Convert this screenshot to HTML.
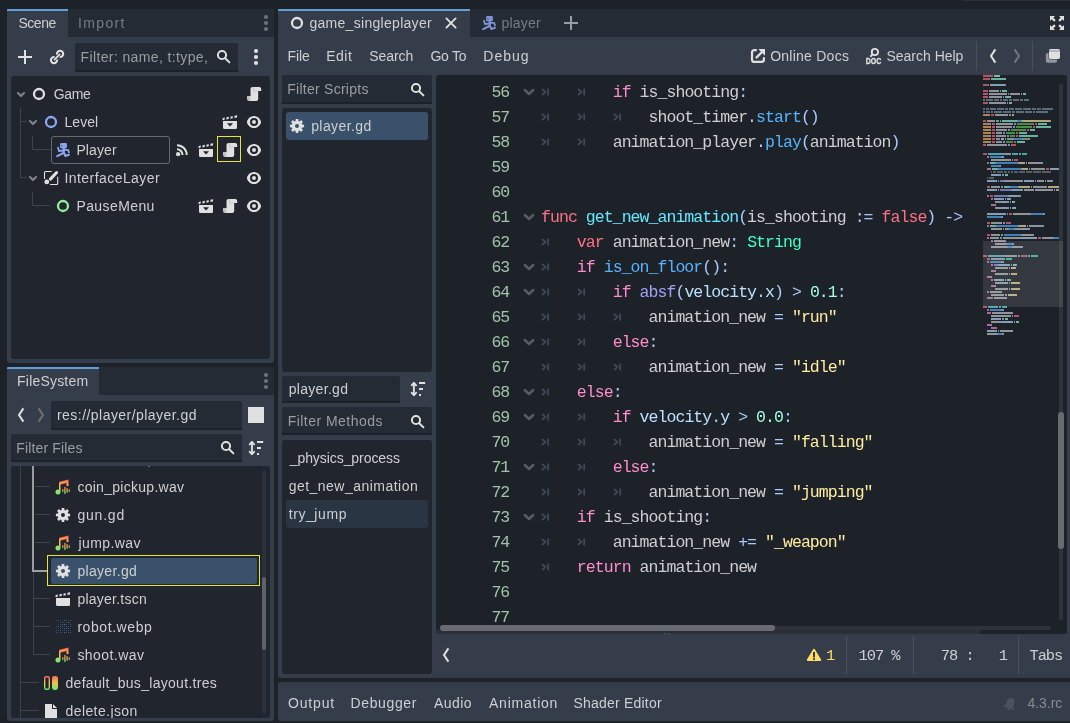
<!DOCTYPE html>
<html lang="en"><head><meta charset="utf-8"><title>Godot Script Editor</title><style>
html,body{margin:0;padding:0;}
body{width:1070px;height:723px;overflow:hidden;background:#1d2229;position:relative;font-family:"Liberation Sans",sans-serif;}
body div,body span,body svg{position:absolute;display:block;}
#root{left:0;top:0;width:1070px;height:723px;overflow:hidden;will-change:transform;}
.t{white-space:pre;font-family:"Liberation Sans",sans-serif;}
.m{white-space:pre;font-family:"Liberation Mono",monospace;}
</style></head><body>
<div id="root">
<div style="left:963px;top:0px;width:107px;height:1px;background:#2a2f38;"></div>
<div style="left:7px;top:9px;width:267px;height:354px;background:#363d4a;border-radius:3px;"></div>
<div style="left:7px;top:9px;width:267px;height:28px;background:#252b34;border-radius:3px 3px 0 0;"></div>
<div style="left:7px;top:9px;width:61px;height:28px;background:#363d4a;border-top:2px solid #5fa0dc;box-sizing:border-box;border-radius:1px 0 0 0;"></div>
<span id="t1" class="t " style="left:18.4px;top:13.0px;line-height:20px;font-size:14px;color:#cdcfd2;letter-spacing:-0.453px;margin-left:0.00px;">Scene</span>
<span id="t2" class="t " style="left:78.9px;top:13.0px;line-height:20px;font-size:14px;color:#777b83;letter-spacing:1.383px;margin-left:-1.00px;">Import</span>
<svg style="left:258px;top:15px;overflow:visible;" width="16" height="16" viewBox="0 0 16 16"><g fill="#6d7177"><circle cx="8" cy="2" r="2.100"/><circle cx="8" cy="8" r="2.100"/><circle cx="8" cy="14" r="2.100"/></g></svg>
<svg style="left:17px;top:49px;overflow:visible;" width="16" height="16" viewBox="0 0 16 16"><path fill="#e0e0e0" d="M7 1v6H1v2h6v6h2V9h6V7H9V1z"/></svg>
<svg style="left:49px;top:49px;overflow:visible;" width="16" height="16" viewBox="0 0 16 16"><g fill="none" stroke="#e0e0e0" stroke-width="2.100"><circle cx="11.100" cy="4.900" r="3.100"/><circle cx="5" cy="11.100" r="3.100"/></g><path d="M6.400 9.700 9.700 6.300" stroke="#363d4a" stroke-width="4" fill="none"/><path d="M5.500 10.600 10.600 5.400" stroke="#e0e0e0" stroke-width="1.800" stroke-linecap="round" fill="none"/></svg>
<div style="left:75px;top:43px;width:163px;height:29px;background:#252b34;border-radius:2px 2px 0 0;border-bottom:2px solid #1d2229;box-sizing:border-box;"></div>
<span id="t3" class="t " style="left:81.5px;top:47.0px;line-height:20px;font-size:14px;color:#9a9da2;letter-spacing:0.378px;margin-left:-1.00px;">Filter: name, t:type,</span>
<svg style="left:214.9px;top:48px;overflow:visible;" width="16" height="16" viewBox="0 0 16 16"><circle cx="7" cy="7" r="4.100" stroke="#e0e0e0" stroke-width="2" fill="none"/><path d="M10.200 10.200 14.400 14.400" stroke="#e0e0e0" stroke-width="2" stroke-linecap="round"/></svg>
<svg style="left:248px;top:49px;overflow:visible;" width="16" height="16" viewBox="0 0 16 16"><g fill="#e0e0e0"><circle cx="8" cy="2" r="2.100"/><circle cx="8" cy="8" r="2.100"/><circle cx="8" cy="14" r="2.100"/></g></svg>
<div style="left:11px;top:76px;width:259px;height:283px;background:#21262e;border-radius:3px;"></div>
<div style="left:20px;top:108px;width:1px;height:70px;background:#3e434b;"></div>
<div style="left:20px;top:121px;width:7px;height:1px;background:#3e434b;"></div>
<div style="left:20px;top:177px;width:7px;height:1px;background:#3e434b;"></div>
<div style="left:32px;top:136px;width:1px;height:14px;background:#3e434b;"></div>
<div style="left:32px;top:149px;width:19px;height:1px;background:#3e434b;"></div>
<div style="left:32px;top:192px;width:1px;height:14px;background:#3e434b;"></div>
<div style="left:32px;top:205px;width:18px;height:1px;background:#3e434b;"></div>
<svg style="left:13px;top:86px;overflow:visible;" width="16" height="16" viewBox="0 0 16 16"><path d="m5 7 3 3 3-3" fill="none" stroke="#7d8086" stroke-width="2.200" stroke-linecap="round" stroke-linejoin="round"/></svg>
<svg style="left:31px;top:86px;overflow:visible;" width="16" height="16" viewBox="0 0 16 16"><circle cx="8" cy="8" r="5" fill="none" stroke="#e0e0e0" stroke-width="2.300"/></svg>
<span id="t4" class="t " style="left:53.8px;top:84.0px;line-height:20px;font-size:14px;color:#cdcfd2;letter-spacing:-0.379px;margin-left:0.00px;">Game</span>
<svg style="left:246px;top:86px;overflow:visible;" width="16" height="16" viewBox="0 0 16 16"><path fill="#e0e0e0" d="M6.500 1a2 2 0 0 0-2 2v7H1v3a2 2 0 0 0 2 2h7.200a2 2 0 0 0 2-2V5h3V3a2 2 0 0 0-2-2z"/><path fill="#000" fill-opacity=".13" d="M1 10h3.500v5H3a2 2 0 0 1-2-2z"/><path d="M7.600 1.200V5H12" fill="none" stroke="#000" stroke-opacity=".13" stroke-width=".8"/></svg>
<svg style="left:25px;top:114px;overflow:visible;" width="16" height="16" viewBox="0 0 16 16"><path d="m5 7 3 3 3-3" fill="none" stroke="#7d8086" stroke-width="2.200" stroke-linecap="round" stroke-linejoin="round"/></svg>
<svg style="left:43px;top:114px;overflow:visible;" width="16" height="16" viewBox="0 0 16 16"><circle cx="8" cy="8" r="5" fill="none" stroke="#8da5f3" stroke-width="2.300"/></svg>
<span id="t5" class="t " style="left:65.5px;top:112.0px;line-height:20px;font-size:14px;color:#cdcfd2;letter-spacing:0.035px;margin-left:-1.00px;">Level</span>
<svg style="left:222px;top:114px;overflow:visible;" width="16" height="16" viewBox="0 0 16 16"><path fill="#e0e0e0" fill-rule="evenodd" d="M1 7H15V13.500a1.500 1.500 0 0 1-1.500 1.500H2.500A1.500 1.500 0 0 1 1 13.500zM5 9.200h6l-3 3.400z"/><path fill="#e0e0e0" d="M0.50 6.18 L0.65 3.95 L2.75 3.58 L2.60 5.80zM4.40 5.48 L4.55 3.26 L6.85 2.85 L6.70 5.07zM8.40 4.77 L8.55 2.55 L10.85 2.14 L10.70 4.36zM12.40 4.06 L12.55 1.83 L15.15 1.37 L15.00 3.60z"/></svg>
<svg style="left:246px;top:114px;overflow:visible;" width="16" height="16" viewBox="0 0 16 16"><path fill="#e0e0e0" fill-rule="evenodd" d="M8 1.900C3.600 1.900 1.200 5.800.9 8c.3 2.200 2.700 6.100 7.100 6.100s6.800-3.900 7.100-6.100C14.800 5.800 12.400 1.900 8 1.900zM8 4a4 4 0 0 1 0 8 4 4 0 0 1 0-8zm0 2a2 2 0 0 0 0 4 2 2 0 0 0 0-4z"/></svg>
<div style="left:51px;top:136px;width:119px;height:28px;background:transparent;border:1px solid #666a72;border-radius:3px;box-sizing:border-box;"></div>
<svg style="left:55px;top:142px;overflow:visible;" width="16" height="16" viewBox="0 0 16 16"><rect x="5.100" y="1" width="6.800" height="5.200" rx="1.200" fill="#8da5f3"/><rect x="6" y="3.100" width="1.700" height="1.400" fill="#1d2229" fill-opacity=".4"/><g fill="none" stroke="#8da5f3" stroke-linecap="round" stroke-linejoin="round"><path d="M8.700 6V11.200" stroke-width="2.300" stroke-linecap="butt"/><path d="M8.500 8.500 3.900 9 3 5.600" stroke-width="1.800"/><path d="M9 7.800H13.100L14 10.400" stroke-width="1.800"/><path d="M8.500 11 2.200 14.200" stroke-width="2"/><path d="M9 11 10.400 14 13.900 12.800" stroke-width="2"/></g></svg>
<span id="t6" class="t " style="left:77.4px;top:140.0px;line-height:20px;font-size:14px;color:#cdcfd2;letter-spacing:0.116px;margin-left:-1.00px;">Player</span>
<svg style="left:174px;top:142px;overflow:visible;" width="16" height="16" viewBox="0 0 16 16"><g fill="none" stroke="#e0e0e0" stroke-width="2"><path d="M3 3.200A9.700 9.700 0 0 1 12.700 12.900"/><path d="M3 7.300A5.600 5.600 0 0 1 8.600 12.900"/></g><circle cx="4.100" cy="12.200" r="2.100" fill="#e0e0e0"/></svg>
<svg style="left:198px;top:142px;overflow:visible;" width="16" height="16" viewBox="0 0 16 16"><path fill="#e0e0e0" fill-rule="evenodd" d="M1 7H15V13.500a1.500 1.500 0 0 1-1.500 1.500H2.500A1.500 1.500 0 0 1 1 13.500zM5 9.200h6l-3 3.400z"/><path fill="#e0e0e0" d="M0.50 6.18 L0.65 3.95 L2.75 3.58 L2.60 5.80zM4.40 5.48 L4.55 3.26 L6.85 2.85 L6.70 5.07zM8.40 4.77 L8.55 2.55 L10.85 2.14 L10.70 4.36zM12.40 4.06 L12.55 1.83 L15.15 1.37 L15.00 3.60z"/></svg>
<div style="left:217px;top:136px;width:24px;height:26px;background:transparent;border:1px solid #e6e62e;box-sizing:border-box;"></div>
<svg style="left:222px;top:142px;overflow:visible;" width="16" height="16" viewBox="0 0 16 16"><path fill="#e0e0e0" d="M6.500 1a2 2 0 0 0-2 2v7H1v3a2 2 0 0 0 2 2h7.200a2 2 0 0 0 2-2V5h3V3a2 2 0 0 0-2-2z"/><path fill="#000" fill-opacity=".13" d="M1 10h3.500v5H3a2 2 0 0 1-2-2z"/><path d="M7.600 1.200V5H12" fill="none" stroke="#000" stroke-opacity=".13" stroke-width=".8"/></svg>
<svg style="left:246px;top:142px;overflow:visible;" width="16" height="16" viewBox="0 0 16 16"><path fill="#e0e0e0" fill-rule="evenodd" d="M8 1.900C3.600 1.900 1.200 5.800.9 8c.3 2.200 2.700 6.100 7.100 6.100s6.800-3.900 7.100-6.100C14.800 5.800 12.400 1.900 8 1.900zM8 4a4 4 0 0 1 0 8 4 4 0 0 1 0-8zm0 2a2 2 0 0 0 0 4 2 2 0 0 0 0-4z"/></svg>
<svg style="left:25px;top:170px;overflow:visible;" width="16" height="16" viewBox="0 0 16 16"><path d="m5 7 3 3 3-3" fill="none" stroke="#7d8086" stroke-width="2.200" stroke-linecap="round" stroke-linejoin="round"/></svg>
<svg style="left:43px;top:170px;overflow:visible;" width="16" height="16" viewBox="0 0 16 16"><g fill="none" stroke="#e0e0e0" stroke-width="1.100"><path d="M1.500 9V2.500a1 1 0 0 1 1-1H8.600"/><path d="M14.700 6.700V13.500a1 1 0 0 1-1 1H7"/></g><path d="M13.600 2.500 7.400 9.100" stroke="#e0e0e0" stroke-width="3" stroke-linecap="round" fill="none"/><circle cx="3.800" cy="11.900" r="2.400" fill="#e0e0e0"/></svg>
<span id="t7" class="t " style="left:65.5px;top:168.0px;line-height:20px;font-size:14px;color:#cdcfd2;letter-spacing:0.436px;margin-left:-1.00px;">InterfaceLayer</span>
<svg style="left:246px;top:170px;overflow:visible;" width="16" height="16" viewBox="0 0 16 16"><path fill="#e0e0e0" fill-rule="evenodd" d="M8 1.900C3.600 1.900 1.200 5.800.9 8c.3 2.200 2.700 6.100 7.100 6.100s6.800-3.900 7.100-6.100C14.800 5.800 12.400 1.900 8 1.900zM8 4a4 4 0 0 1 0 8 4 4 0 0 1 0-8zm0 2a2 2 0 0 0 0 4 2 2 0 0 0 0-4z"/></svg>
<svg style="left:55px;top:198px;overflow:visible;" width="16" height="16" viewBox="0 0 16 16"><circle cx="8" cy="8" r="5" fill="none" stroke="#8eef97" stroke-width="2.300"/></svg>
<span id="t8" class="t " style="left:77.4px;top:196.0px;line-height:20px;font-size:14px;color:#cdcfd2;letter-spacing:0.409px;margin-left:-1.00px;">PauseMenu</span>
<svg style="left:198px;top:198px;overflow:visible;" width="16" height="16" viewBox="0 0 16 16"><path fill="#e0e0e0" fill-rule="evenodd" d="M1 7H15V13.500a1.500 1.500 0 0 1-1.500 1.500H2.500A1.500 1.500 0 0 1 1 13.500zM5 9.200h6l-3 3.400z"/><path fill="#e0e0e0" d="M0.50 6.18 L0.65 3.95 L2.75 3.58 L2.60 5.80zM4.40 5.48 L4.55 3.26 L6.85 2.85 L6.70 5.07zM8.40 4.77 L8.55 2.55 L10.85 2.14 L10.70 4.36zM12.40 4.06 L12.55 1.83 L15.15 1.37 L15.00 3.60z"/></svg>
<svg style="left:222px;top:198px;overflow:visible;" width="16" height="16" viewBox="0 0 16 16"><path fill="#e0e0e0" d="M6.500 1a2 2 0 0 0-2 2v7H1v3a2 2 0 0 0 2 2h7.200a2 2 0 0 0 2-2V5h3V3a2 2 0 0 0-2-2z"/><path fill="#000" fill-opacity=".13" d="M1 10h3.500v5H3a2 2 0 0 1-2-2z"/><path d="M7.600 1.200V5H12" fill="none" stroke="#000" stroke-opacity=".13" stroke-width=".8"/></svg>
<svg style="left:246px;top:198px;overflow:visible;" width="16" height="16" viewBox="0 0 16 16"><path fill="#e0e0e0" fill-rule="evenodd" d="M8 1.900C3.600 1.900 1.200 5.800.9 8c.3 2.200 2.700 6.100 7.100 6.100s6.800-3.900 7.100-6.100C14.800 5.800 12.400 1.900 8 1.900zM8 4a4 4 0 0 1 0 8 4 4 0 0 1 0-8zm0 2a2 2 0 0 0 0 4 2 2 0 0 0 0-4z"/></svg>
<div style="left:7px;top:367px;width:267px;height:354px;background:#363d4a;border-radius:3px;"></div>
<div style="left:7px;top:367px;width:267px;height:28px;background:#252b34;border-radius:3px 3px 0 0;"></div>
<div style="left:7px;top:367px;width:92px;height:28px;background:#363d4a;border-top:2px solid #5fa0dc;box-sizing:border-box;border-radius:1px 0 0 0;"></div>
<span id="t9" class="t " style="left:18.1px;top:371.0px;line-height:20px;font-size:14px;color:#cdcfd2;letter-spacing:0.192px;margin-left:-1.00px;">FileSystem</span>
<svg style="left:258px;top:373px;overflow:visible;" width="16" height="16" viewBox="0 0 16 16"><g fill="#6d7177"><circle cx="8" cy="2" r="2.100"/><circle cx="8" cy="8" r="2.100"/><circle cx="8" cy="14" r="2.100"/></g></svg>
<svg style="left:13px;top:407px;overflow:visible;" width="16" height="16" viewBox="0 0 16 16"><path d="M10.400 1.400 6 8l4.400 6.600" stroke="#e0e0e0" stroke-width="2" stroke-linejoin="miter" fill="none"/></svg>
<svg style="left:33px;top:407px;overflow:visible;" width="16" height="16" viewBox="0 0 16 16"><path d="M5.600 1.400 10 8l-4.400 6.600" stroke="#6d7177" stroke-width="2" stroke-linejoin="miter" fill="none"/></svg>
<div style="left:51px;top:401px;width:191px;height:29px;background:#252b34;border-radius:2px 2px 0 0;border-bottom:2px solid #1d2229;box-sizing:border-box;"></div>
<span id="t10" class="t " style="left:57px;top:405.0px;line-height:20px;font-size:14px;color:#cdcfd2;letter-spacing:0.454px;margin-left:0.00px;">res://player/player.gd</span>
<div style="left:248px;top:407px;width:16px;height:16px;background:#e0e0e0;"></div>
<div style="left:11px;top:434px;width:231px;height:28px;background:#252b34;border-radius:2px 2px 0 0;border-bottom:2px solid #1d2229;box-sizing:border-box;"></div>
<span id="t11" class="t " style="left:17.3px;top:438.0px;line-height:20px;font-size:14px;color:#9a9da2;letter-spacing:0.149px;margin-left:-1.00px;">Filter Files</span>
<svg style="left:218.9px;top:439px;overflow:visible;" width="16" height="16" viewBox="0 0 16 16"><circle cx="7" cy="7" r="4.100" stroke="#e0e0e0" stroke-width="2" fill="none"/><path d="M10.200 10.200 14.400 14.400" stroke="#e0e0e0" stroke-width="2" stroke-linecap="round"/></svg>
<svg style="left:248px;top:440px;overflow:visible;" width="16" height="16" viewBox="0 0 16 16"><g fill="none" stroke="#e0e0e0" stroke-width="1.900" stroke-linecap="round" stroke-linejoin="round"><path d="M3.900 2.200V13.900"/><path d="M1.700 4.300 3.900 2 6.100 4.300"/><path d="M1.700 11.800 3.900 14.100 6.100 11.800"/></g><path fill="#e0e0e0" d="M9 1.100h6.200v1.800H9zM9 7h4v2H9zM9 12.900h2V15H9z"/></svg>
<div style="left:11px;top:466px;width:259px;height:252px;background:#21262e;border-radius:3px;"></div>
<div style="left:11px;top:466px;width:259px;height:252px;overflow:hidden;border-radius:3px;">
<div style="left:9px;top:0px;width:1px;height:252px;background:#3e434b;"></div>
<div style="left:21px;top:0px;width:2px;height:106px;background:#9b9da1;"></div>
<div style="left:21px;top:104px;width:15px;height:2px;background:#9b9da1;"></div>
<div style="left:22px;top:106px;width:1px;height:83px;background:#3e434b;"></div>
<div style="left:24px;top:20px;width:15px;height:1px;background:#3e434b;"></div>
<div style="left:24px;top:48px;width:15px;height:1px;background:#3e434b;"></div>
<div style="left:24px;top:76px;width:15px;height:1px;background:#3e434b;"></div>
<div style="left:22px;top:132px;width:17px;height:1px;background:#3e434b;"></div>
<div style="left:22px;top:160px;width:17px;height:1px;background:#3e434b;"></div>
<div style="left:22px;top:188px;width:17px;height:1px;background:#3e434b;"></div>
<div style="left:9px;top:216px;width:19px;height:1px;background:#3e434b;"></div>
<div style="left:9px;top:244px;width:19px;height:1px;background:#3e434b;"></div>
<div style="left:137px;top:0px;width:2px;height:1px;background:#6d7075;"></div>
</div>
<div style="left:47px;top:555px;width:213px;height:31px;background:transparent;border:1px solid #e6e62e;box-sizing:border-box;"></div>
<div style="left:51px;top:558px;width:206px;height:26px;background:#39516a;border-radius:2px;"></div>
<svg style="left:55px;top:479px;overflow:visible;" width="16" height="16" viewBox="0 0 16 16"><defs><linearGradient id="ag0" x1="0" y1="0" x2="0" y2="1"><stop offset="0" stop-color="#ff6b5a"/><stop offset=".5" stop-color="#f0c050"/><stop offset="1" stop-color="#62f070"/></linearGradient></defs><g fill="url(#ag0)"><path d="M13.500 .6 4.700 2.700a1 1 0 0 0-.7 1v7.040A2.600 2.600 0 0 0 3 10.500a2.500 2.500 0 1 0 2.500 2.500V5.500l6-1.400V7h2z"/><rect x="7.300" y="10" width="1" height="3" rx=".5"/><rect x="9.300" y="7.500" width="1.200" height="7.500" rx=".6"/><rect x="11.500" y="8.800" width="1.200" height="5" rx=".6"/><rect x="13.700" y="10" width="1" height="3" rx=".5"/></g></svg>
<span id="t12" class="t " style="left:77.4px;top:477.0px;line-height:20px;font-size:14px;color:#cdcfd2;letter-spacing:0.277px;margin-left:0.00px;">coin_pickup.wav</span>
<svg style="left:55px;top:507px;overflow:visible;" width="16" height="16" viewBox="0 0 16 16"><path fill="#e0e0e0" fill-rule="evenodd" d="M6.56 2.90 L6.71 0.92 L9.29 0.92 L9.44 2.90 L10.59 3.38 L12.09 2.08 L13.92 3.91 L12.62 5.41 L13.10 6.56 L15.08 6.71 L15.08 9.29 L13.10 9.44 L12.62 10.59 L13.92 12.09 L12.09 13.92 L10.59 12.62 L9.44 13.10 L9.29 15.08 L6.71 15.08 L6.56 13.10 L5.41 12.62 L3.91 13.92 L2.08 12.09 L3.38 10.59 L2.90 9.44 L0.92 9.29 L0.92 6.71 L2.90 6.56 L3.38 5.41 L2.08 3.91 L3.91 2.08 L5.41 3.38z M8 6a2 2 0 0 0 0 4 2 2 0 0 0 0-4z"/></svg>
<span id="t13" class="t " style="left:77.4px;top:505.0px;line-height:20px;font-size:14px;color:#cdcfd2;letter-spacing:0.793px;margin-left:0.00px;">gun.gd</span>
<svg style="left:55px;top:535px;overflow:visible;" width="16" height="16" viewBox="0 0 16 16"><defs><linearGradient id="ag2" x1="0" y1="0" x2="0" y2="1"><stop offset="0" stop-color="#ff6b5a"/><stop offset=".5" stop-color="#f0c050"/><stop offset="1" stop-color="#62f070"/></linearGradient></defs><g fill="url(#ag2)"><path d="M13.500 .6 4.700 2.700a1 1 0 0 0-.7 1v7.040A2.600 2.600 0 0 0 3 10.500a2.500 2.500 0 1 0 2.500 2.500V5.500l6-1.400V7h2z"/><rect x="7.300" y="10" width="1" height="3" rx=".5"/><rect x="9.300" y="7.500" width="1.200" height="7.500" rx=".6"/><rect x="11.500" y="8.800" width="1.200" height="5" rx=".6"/><rect x="13.700" y="10" width="1" height="3" rx=".5"/></g></svg>
<span id="t14" class="t " style="left:77.4px;top:533.0px;line-height:20px;font-size:14px;color:#cdcfd2;letter-spacing:0.424px;margin-left:1.00px;">jump.wav</span>
<svg style="left:55px;top:563px;overflow:visible;" width="16" height="16" viewBox="0 0 16 16"><path fill="#e0e0e0" fill-rule="evenodd" d="M6.56 2.90 L6.71 0.92 L9.29 0.92 L9.44 2.90 L10.59 3.38 L12.09 2.08 L13.92 3.91 L12.62 5.41 L13.10 6.56 L15.08 6.71 L15.08 9.29 L13.10 9.44 L12.62 10.59 L13.92 12.09 L12.09 13.92 L10.59 12.62 L9.44 13.10 L9.29 15.08 L6.71 15.08 L6.56 13.10 L5.41 12.62 L3.91 13.92 L2.08 12.09 L3.38 10.59 L2.90 9.44 L0.92 9.29 L0.92 6.71 L2.90 6.56 L3.38 5.41 L2.08 3.91 L3.91 2.08 L5.41 3.38z M8 6a2 2 0 0 0 0 4 2 2 0 0 0 0-4z"/></svg>
<span id="t15" class="t " style="left:77.4px;top:561.0px;line-height:20px;font-size:14px;color:#cdcfd2;letter-spacing:0.321px;margin-left:0.00px;">player.gd</span>
<svg style="left:55px;top:591px;overflow:visible;" width="16" height="16" viewBox="0 0 16 16"><path fill="#e0e0e0" d="M1 7H15V13.500a1.500 1.500 0 0 1-1.500 1.500H2.500A1.500 1.500 0 0 1 1 13.500z"/><path fill="#e0e0e0" d="M0.50 6.18 L0.65 3.95 L2.75 3.58 L2.60 5.80zM4.40 5.48 L4.55 3.26 L6.85 2.85 L6.70 5.07zM8.40 4.77 L8.55 2.55 L10.85 2.14 L10.70 4.36zM12.40 4.06 L12.55 1.83 L15.15 1.37 L15.00 3.60z"/></svg>
<span id="t16" class="t " style="left:77.4px;top:589.0px;line-height:20px;font-size:14px;color:#cdcfd2;letter-spacing:0.246px;margin-left:0.00px;">player.tscn</span>
<svg style="left:55px;top:619px;overflow:visible;shape-rendering:crispEdges;" width="16" height="16" viewBox="0 0 16 16"><rect x="1" y="1" width="1" height="1" fill="#3a5f9f" fill-opacity="0.45"/><rect x="3" y="1" width="1" height="1" fill="#4a78c0" fill-opacity="0.6"/><rect x="5" y="1" width="1" height="1" fill="#2f4f8f" fill-opacity="0.2"/><rect x="7" y="1" width="1" height="1" fill="#5a8fd0" fill-opacity="0.2"/><rect x="9" y="1" width="1" height="1" fill="#4a78c0" fill-opacity="0.8"/><rect x="11" y="1" width="1" height="1" fill="#3a5f9f" fill-opacity="0.8"/><rect x="13" y="1" width="1" height="1" fill="#4a78c0" fill-opacity="0.2"/><rect x="15" y="1" width="1" height="1" fill="#6f7f9f" fill-opacity="0.6"/><rect x="1" y="3" width="1" height="1" fill="#3a5f9f" fill-opacity="0.2"/><rect x="3" y="3" width="1" height="1" fill="#2f4f8f" fill-opacity="0.2"/><rect x="5" y="3" width="1" height="1" fill="#4a78c0" fill-opacity="0.6"/><rect x="7" y="3" width="1" height="1" fill="#4a78c0" fill-opacity="0.8"/><rect x="9" y="3" width="1" height="1" fill="#2f4f8f" fill-opacity="0.3"/><rect x="11" y="3" width="1" height="1" fill="#2f4f8f" fill-opacity="0.2"/><rect x="13" y="3" width="1" height="1" fill="#6f7f9f" fill-opacity="0.8"/><rect x="15" y="3" width="1" height="1" fill="#3a5f9f" fill-opacity="0.2"/><rect x="1" y="5" width="1" height="1" fill="#2f4f8f" fill-opacity="0.2"/><rect x="3" y="5" width="1" height="1" fill="#5a8fd0" fill-opacity="0.3"/><rect x="5" y="5" width="1" height="1" fill="#3a5f9f" fill-opacity="0.6"/><rect x="7" y="5" width="1" height="1" fill="#4a78c0" fill-opacity="0.8"/><rect x="9" y="5" width="1" height="1" fill="#5a8fd0" fill-opacity="0.8"/><rect x="11" y="5" width="1" height="1" fill="#3a5f9f" fill-opacity="0.8"/><rect x="13" y="5" width="1" height="1" fill="#2f4f8f" fill-opacity="0.2"/><rect x="15" y="5" width="1" height="1" fill="#3a5f9f" fill-opacity="0.8"/><rect x="1" y="7" width="1" height="1" fill="#4a78c0" fill-opacity="0.45"/><rect x="3" y="7" width="1" height="1" fill="#4a78c0" fill-opacity="0.8"/><rect x="5" y="7" width="1" height="1" fill="#4a78c0" fill-opacity="0.8"/><rect x="7" y="7" width="1" height="1" fill="#3a5f9f" fill-opacity="0.8"/><rect x="9" y="7" width="1" height="1" fill="#2f4f8f" fill-opacity="0.6"/><rect x="11" y="7" width="1" height="1" fill="#5a8fd0" fill-opacity="0.6"/><rect x="13" y="7" width="1" height="1" fill="#2f4f8f" fill-opacity="0.6"/><rect x="15" y="7" width="1" height="1" fill="#5a8fd0" fill-opacity="0.6"/><rect x="1" y="9" width="1" height="1" fill="#3a5f9f" fill-opacity="0.45"/><rect x="3" y="9" width="1" height="1" fill="#3a5f9f" fill-opacity="0.3"/><rect x="5" y="9" width="1" height="1" fill="#2f4f8f" fill-opacity="0.2"/><rect x="7" y="9" width="1" height="1" fill="#2f4f8f" fill-opacity="0.45"/><rect x="9" y="9" width="1" height="1" fill="#5a8fd0" fill-opacity="0.6"/><rect x="11" y="9" width="1" height="1" fill="#5a8fd0" fill-opacity="0.6"/><rect x="13" y="9" width="1" height="1" fill="#4a78c0" fill-opacity="0.8"/><rect x="15" y="9" width="1" height="1" fill="#2f4f8f" fill-opacity="0.2"/><rect x="1" y="11" width="1" height="1" fill="#3a5f9f" fill-opacity="0.6"/><rect x="3" y="11" width="1" height="1" fill="#3a5f9f" fill-opacity="0.45"/><rect x="5" y="11" width="1" height="1" fill="#6f7f9f" fill-opacity="0.6"/><rect x="7" y="11" width="1" height="1" fill="#4a78c0" fill-opacity="0.2"/><rect x="9" y="11" width="1" height="1" fill="#2f4f8f" fill-opacity="0.8"/><rect x="11" y="11" width="1" height="1" fill="#5a8fd0" fill-opacity="0.45"/><rect x="13" y="11" width="1" height="1" fill="#2f4f8f" fill-opacity="0.45"/><rect x="15" y="11" width="1" height="1" fill="#2f4f8f" fill-opacity="0.6"/><rect x="1" y="13" width="1" height="1" fill="#4a78c0" fill-opacity="0.6"/><rect x="3" y="13" width="1" height="1" fill="#5a8fd0" fill-opacity="0.2"/><rect x="5" y="13" width="1" height="1" fill="#4a78c0" fill-opacity="0.6"/><rect x="7" y="13" width="1" height="1" fill="#5a8fd0" fill-opacity="0.2"/><rect x="9" y="13" width="1" height="1" fill="#6f7f9f" fill-opacity="0.8"/><rect x="11" y="13" width="1" height="1" fill="#6f7f9f" fill-opacity="0.45"/><rect x="13" y="13" width="1" height="1" fill="#4a78c0" fill-opacity="0.45"/><rect x="15" y="13" width="1" height="1" fill="#5a8fd0" fill-opacity="0.6"/></svg>
<span id="t17" class="t " style="left:77.4px;top:617.0px;line-height:20px;font-size:14px;color:#cdcfd2;letter-spacing:0.569px;margin-left:0.00px;">robot.webp</span>
<svg style="left:55px;top:647px;overflow:visible;" width="16" height="16" viewBox="0 0 16 16"><defs><linearGradient id="ag6" x1="0" y1="0" x2="0" y2="1"><stop offset="0" stop-color="#ff6b5a"/><stop offset=".5" stop-color="#f0c050"/><stop offset="1" stop-color="#62f070"/></linearGradient></defs><g fill="url(#ag6)"><path d="M13.500 .6 4.700 2.700a1 1 0 0 0-.7 1v7.040A2.600 2.600 0 0 0 3 10.500a2.500 2.500 0 1 0 2.500 2.500V5.500l6-1.400V7h2z"/><rect x="7.300" y="10" width="1" height="3" rx=".5"/><rect x="9.300" y="7.500" width="1.200" height="7.500" rx=".6"/><rect x="11.500" y="8.800" width="1.200" height="5" rx=".6"/><rect x="13.700" y="10" width="1" height="3" rx=".5"/></g></svg>
<span id="t18" class="t " style="left:77.4px;top:645.0px;line-height:20px;font-size:14px;color:#cdcfd2;letter-spacing:0.446px;margin-left:0.00px;">shoot.wav</span>
<svg style="left:43px;top:675px;overflow:visible;" width="16" height="16" viewBox="0 0 16 16"><defs><linearGradient id="bgb" x1="0" y1="0" x2="0" y2="1"><stop offset="0" stop-color="#ff6b5a"/><stop offset=".5" stop-color="#f0c050"/><stop offset="1" stop-color="#62f070"/></linearGradient></defs><rect x="1.700" y="1.700" width="4.600" height="12.600" rx="1.600" fill="none" stroke="url(#bgb)" stroke-width="1.400"/><rect x="9" y="1" width="6" height="14" rx="2.400" fill="url(#bgb)"/></svg>
<span id="t19" class="t " style="left:65.5px;top:673.0px;line-height:20px;font-size:14px;color:#cdcfd2;letter-spacing:0.297px;margin-left:0.00px;">default_bus_layout.tres</span>
<div style="left:11px;top:700px;width:259px;height:18px;overflow:hidden;">
<svg style="left:32px;top:3px;overflow:visible;" width="16" height="16" viewBox="0 0 16 16"><path fill="#e0e0e0" d="M2 1v14h12V6H9V1zm8 0v4h4z"/></svg>
</div>
<div style="left:60px;top:700px;width:200px;height:18px;overflow:hidden;">
<span id="t20" class="t" style="left:5.50px;top:1px;line-height:20px;font-size:14px;color:#cdcfd2;letter-spacing:0.407px;">delete.json</span>
</div>
<div style="left:262px;top:470px;width:4px;height:244px;background:#2c3139;border-radius:2px;"></div>
<div style="left:262px;top:577px;width:4px;height:73px;background:#5d6168;border-radius:2px;"></div>
<div style="left:278px;top:9px;width:792px;height:669px;background:#363d4a;border-radius:3px 0 0 3px;"></div>
<div style="left:278px;top:9px;width:792px;height:28px;background:#252b34;border-radius:3px 0 0 0;"></div>
<div style="left:278px;top:9px;width:192px;height:28px;background:#363d4a;border-top:2px solid #5fa0dc;box-sizing:border-box;border-radius:1px 0 0 0;"></div>
<svg style="left:289px;top:15px;overflow:visible;" width="16" height="16" viewBox="0 0 16 16"><circle cx="8" cy="8" r="5" fill="none" stroke="#e0e0e0" stroke-width="2.300"/></svg>
<span id="t21" class="t " style="left:309.4px;top:13.0px;line-height:20px;font-size:14px;color:#cdcfd2;letter-spacing:0.297px;margin-left:0.00px;">game_singleplayer</span>
<svg style="left:445px;top:17px;overflow:visible;" width="12" height="12" viewBox="1.5 1.5 13 13"><path d="M3 3l10 10M13 3L3 13" stroke="#e0e0e0" stroke-width="2" stroke-linecap="round" fill="none"/></svg>
<svg style="left:481px;top:15px;overflow:visible;opacity:.85;" width="16" height="16" viewBox="0 0 16 16"><rect x="5.100" y="1" width="6.800" height="5.200" rx="1.200" fill="#8da5f3"/><rect x="6" y="3.100" width="1.700" height="1.400" fill="#1d2229" fill-opacity=".4"/><g fill="none" stroke="#8da5f3" stroke-linecap="round" stroke-linejoin="round"><path d="M8.700 6V11.200" stroke-width="2.300" stroke-linecap="butt"/><path d="M8.500 8.500 3.900 9 3 5.600" stroke-width="1.800"/><path d="M9 7.800H13.100L14 10.400" stroke-width="1.800"/><path d="M8.500 11 2.200 14.200" stroke-width="2"/><path d="M9 11 10.400 14 13.900 12.800" stroke-width="2"/></g></svg>
<span id="t22" class="t " style="left:501.4px;top:13.0px;line-height:20px;font-size:14px;color:#777b83;letter-spacing:0.226px;margin-left:0.00px;">player</span>
<svg style="left:563px;top:15px;overflow:visible;" width="16" height="16" viewBox="0 0 16 16"><path fill="#999ca2" d="M7 1v6H1v2h6v6h2V9h6V7H9V1z"/></svg>
<svg style="left:1049px;top:15px;overflow:visible;" width="16" height="16" viewBox="0 0 16 16"><g fill="#e0e0e0"><path d="M1 1h5L4.300 2.700 6.700 5.100 5.100 6.700 2.700 4.300 1 6z"/><path d="M15 1v5l-1.700-1.700-2.400 2.400-1.600-1.600 2.400-2.400L10 1z"/><path d="M1 15v-5l1.700 1.700 2.400-2.400 1.600 1.600-2.400 2.400L6 15z"/><path d="M15 15h-5l1.700-1.700-2.400-2.400 1.600-1.600 2.400 2.400L15 10z"/></g></svg>
<span id="t23" class="t " style="left:288.5px;top:46.0px;line-height:20px;font-size:14px;color:#cdcfd2;letter-spacing:-0.091px;margin-left:-1.00px;">File</span>
<span id="t24" class="t " style="left:327.3px;top:46.0px;line-height:20px;font-size:14px;color:#cdcfd2;letter-spacing:0.455px;margin-left:-1.00px;">Edit</span>
<span id="t25" class="t " style="left:369.2px;top:46.0px;line-height:20px;font-size:14px;color:#cdcfd2;letter-spacing:-0.034px;margin-left:0.00px;">Search</span>
<span id="t26" class="t " style="left:430.5px;top:46.0px;line-height:20px;font-size:14px;color:#cdcfd2;letter-spacing:-0.266px;margin-left:0.00px;">Go To</span>
<span id="t27" class="t " style="left:484.3px;top:46.0px;line-height:20px;font-size:14px;color:#cdcfd2;letter-spacing:0.983px;margin-left:-1.00px;">Debug</span>
<svg style="left:750px;top:48px;overflow:visible;" width="16" height="16" viewBox="0 0 16 16"><path fill="none" stroke="#e0e0e0" stroke-width="2.200" d="M6.800 2.200H4.500a2.500 2.500 0 0 0-2.500 2.500v6.700a2.500 2.500 0 0 0 2.500 2.500h6.900a2.500 2.500 0 0 0 2.500-2.500V9.300"/><path fill="#e0e0e0" d="M8.300 1.100H15V7.800z"/><path d="M5.900 10.100 12 4" stroke="#e0e0e0" stroke-width="2.400" fill="none"/></svg>
<span id="t28" class="t " style="left:770.2px;top:46.0px;line-height:20px;font-size:14px;color:#cdcfd2;letter-spacing:0.245px;margin-left:0.00px;">Online Docs</span>
<svg style="left:865px;top:48px;overflow:visible;" width="16" height="16" viewBox="0 0 16 16"><circle cx="9.900" cy="4" r="3.150" fill="none" stroke="#e0e0e0" stroke-width="1.900"/><path d="M7.600 6.400 5.300 8.700" stroke="#e0e0e0" stroke-width="2" fill="none"/><text x=".7" y="16" font-family="Liberation Sans,sans-serif" font-weight="bold" font-size="8.300" fill="#e0e0e0" stroke="#e0e0e0" stroke-width=".3" textLength="15.600" lengthAdjust="spacingAndGlyphs">DOC</text></svg>
<span id="t29" class="t " style="left:886.5px;top:46.0px;line-height:20px;font-size:14px;color:#cdcfd2;letter-spacing:-0.015px;margin-left:0.00px;">Search Help</span>
<div style="left:976px;top:41px;width:1px;height:30px;background:#4a505c;"></div>
<svg style="left:985px;top:48px;overflow:visible;" width="16" height="16" viewBox="0 0 16 16"><path d="M10.400 1.400 6 8l4.400 6.600" stroke="#e0e0e0" stroke-width="2" stroke-linejoin="miter" fill="none"/></svg>
<svg style="left:1009px;top:48px;overflow:visible;" width="16" height="16" viewBox="0 0 16 16"><path d="M5.600 1.400 10 8l-4.400 6.600" stroke="#737780" stroke-width="2" stroke-linejoin="miter" fill="none"/></svg>
<div style="left:1032px;top:41px;width:1px;height:30px;background:#4a505c;"></div>
<svg style="left:1045px;top:48px;overflow:visible;" width="16" height="16" viewBox="0 0 16 16"><rect x=".9" y="5" width="11.100" height="9.700" rx="1.600" fill="#e0e0e0" fill-opacity=".55"/><rect x="3.500" y=".4" width="12" height="11" rx="2" fill="#363d4a"/><rect x="4" y=".9" width="11" height="10" rx="1.600" fill="#e0e0e0"/><rect x="4" y="2.700" width="11" height=".6" fill="#363d4a" fill-opacity=".8"/></svg>
<div style="left:282px;top:75px;width:150px;height:29px;background:#252b34;border-radius:2px 2px 0 0;border-bottom:2px solid #1d2229;box-sizing:border-box;"></div>
<span id="t30" class="t " style="left:288.2px;top:79.0px;line-height:20px;font-size:14px;color:#9a9da2;letter-spacing:0.263px;margin-left:-1.00px;">Filter Scripts</span>
<svg style="left:408.9px;top:80.5px;overflow:visible;" width="16" height="16" viewBox="0 0 16 16"><circle cx="7" cy="7" r="4.100" stroke="#e0e0e0" stroke-width="2" fill="none"/><path d="M10.200 10.200 14.400 14.400" stroke="#e0e0e0" stroke-width="2" stroke-linecap="round"/></svg>
<div style="left:282px;top:108px;width:150px;height:264px;background:#21262e;border-radius:3px;"></div>
<div style="left:286px;top:112px;width:142px;height:28px;background:#39516a;border-radius:3px;"></div>
<svg style="left:289px;top:118px;overflow:visible;" width="16" height="16" viewBox="0 0 16 16"><path fill="#e0e0e0" fill-rule="evenodd" d="M6.56 2.90 L6.71 0.92 L9.29 0.92 L9.44 2.90 L10.59 3.38 L12.09 2.08 L13.92 3.91 L12.62 5.41 L13.10 6.56 L15.08 6.71 L15.08 9.29 L13.10 9.44 L12.62 10.59 L13.92 12.09 L12.09 13.92 L10.59 12.62 L9.44 13.10 L9.29 15.08 L6.71 15.08 L6.56 13.10 L5.41 12.62 L3.91 13.92 L2.08 12.09 L3.38 10.59 L2.90 9.44 L0.92 9.29 L0.92 6.71 L2.90 6.56 L3.38 5.41 L2.08 3.91 L3.91 2.08 L5.41 3.38z M8 6a2 2 0 0 0 0 4 2 2 0 0 0 0-4z"/></svg>
<span id="t31" class="t " style="left:311.2px;top:116.0px;line-height:20px;font-size:14px;color:#cdcfd2;letter-spacing:0.396px;margin-left:0.00px;">player.gd</span>
<div style="left:282px;top:376px;width:118px;height:27px;background:#252b34;border-radius:2px 2px 0 0;border-bottom:2px solid #1d2229;box-sizing:border-box;"></div>
<span id="t32" class="t " style="left:288.7px;top:379.0px;line-height:20px;font-size:14px;color:#cdcfd2;letter-spacing:0.308px;margin-left:0.00px;">player.gd</span>
<svg style="left:409.5px;top:381px;overflow:visible;" width="16" height="16" viewBox="0 0 16 16"><g fill="none" stroke="#e0e0e0" stroke-width="1.900" stroke-linecap="round" stroke-linejoin="round"><path d="M3.900 2.200V13.900"/><path d="M1.700 4.300 3.900 2 6.100 4.300"/><path d="M1.700 11.800 3.900 14.100 6.100 11.800"/></g><path fill="#e0e0e0" d="M9 1.100h6.200v1.800H9zM9 7h4v2H9zM9 12.900h2V15H9z"/></svg>
<div style="left:282px;top:407px;width:150px;height:28px;background:#252b34;border-radius:2px 2px 0 0;border-bottom:2px solid #1d2229;box-sizing:border-box;"></div>
<span id="t33" class="t " style="left:288.7px;top:411.0px;line-height:20px;font-size:14px;color:#9a9da2;letter-spacing:0.470px;margin-left:-1.00px;">Filter Methods</span>
<svg style="left:408.9px;top:412.5px;overflow:visible;" width="16" height="16" viewBox="0 0 16 16"><circle cx="7" cy="7" r="4.100" stroke="#e0e0e0" stroke-width="2" fill="none"/><path d="M10.200 10.200 14.400 14.400" stroke="#e0e0e0" stroke-width="2" stroke-linecap="round"/></svg>
<div style="left:282px;top:440px;width:150px;height:234px;background:#21262e;border-radius:3px;"></div>
<div style="left:286px;top:500px;width:142px;height:28px;background:#2a3543;border-radius:3px;"></div>
<span id="t34" class="t " style="left:288.7px;top:448.0px;line-height:20px;font-size:14px;color:#cdcfd2;letter-spacing:-0.065px;margin-left:1.00px;">_physics_process</span>
<span id="t35" class="t " style="left:288.7px;top:476.0px;line-height:20px;font-size:14px;color:#cdcfd2;letter-spacing:0.473px;margin-left:0.00px;">get_new_animation</span>
<span id="t36" class="t " style="left:288.7px;top:504.0px;line-height:20px;font-size:14px;color:#cdcfd2;letter-spacing:0.586px;margin-left:0.00px;">try_jump</span>
<div style="left:436px;top:75px;width:631px;height:559px;background:#1d2229;border-radius:3px;overflow:hidden;">
<div style="left:0;top:0;width:536px;height:559px;overflow:hidden;">
<span class="m" style="left:18.30000000000001px;top:5px;width:55px;text-align:right;line-height:25px;font-size:16.5px;letter-spacing:-0.9416px;color:#a1c2a8;">56</span>
<svg style="left:85px;top:8.75px" width="16" height="16" viewBox="0 0 16 16"><path d="m3.800 6 4.200 4 4.200-4" fill="none" stroke="#575b62" stroke-width="2.500" stroke-linecap="round" stroke-linejoin="round"/></svg>
<svg style="left:105.0px;top:11.75px" width="9" height="10" viewBox="0 0 9 10"><path d="M1 2 4.600 5 1 8" fill="none" stroke="#404759" stroke-width="1.700" stroke-linejoin="miter"/><path d="M7.200 1.500V8.500" stroke="#404759" stroke-width="1.800"/></svg>
<svg style="left:140.84px;top:11.75px" width="9" height="10" viewBox="0 0 9 10"><path d="M1 2 4.600 5 1 8" fill="none" stroke="#404759" stroke-width="1.700" stroke-linejoin="miter"/><path d="M7.200 1.500V8.500" stroke="#404759" stroke-width="1.800"/></svg>
<div class="m code" style="left:105px;top:5px;line-height:25px;font-size:16.5px;letter-spacing:-0.9416px;height:25px;">        <span style="position:static;display:inline;color:#ff8ccc">if</span> <span style="position:static;display:inline;color:#cdcfd2">is_shooting</span><span style="position:static;display:inline;color:#abc9ff">:</span></div>
<span class="m" style="left:18.30000000000001px;top:30px;width:55px;text-align:right;line-height:25px;font-size:16.5px;letter-spacing:-0.9416px;color:#a1c2a8;">57</span>
<svg style="left:105.0px;top:36.75px" width="9" height="10" viewBox="0 0 9 10"><path d="M1 2 4.600 5 1 8" fill="none" stroke="#404759" stroke-width="1.700" stroke-linejoin="miter"/><path d="M7.200 1.500V8.500" stroke="#404759" stroke-width="1.800"/></svg>
<svg style="left:140.84px;top:36.75px" width="9" height="10" viewBox="0 0 9 10"><path d="M1 2 4.600 5 1 8" fill="none" stroke="#404759" stroke-width="1.700" stroke-linejoin="miter"/><path d="M7.200 1.500V8.500" stroke="#404759" stroke-width="1.800"/></svg>
<svg style="left:176.68px;top:36.75px" width="9" height="10" viewBox="0 0 9 10"><path d="M1 2 4.600 5 1 8" fill="none" stroke="#404759" stroke-width="1.700" stroke-linejoin="miter"/><path d="M7.200 1.500V8.500" stroke="#404759" stroke-width="1.800"/></svg>
<div class="m code" style="left:105px;top:30px;line-height:25px;font-size:16.5px;letter-spacing:-0.9416px;height:25px;">            <span style="position:static;display:inline;color:#cdcfd2">shoot_timer</span><span style="position:static;display:inline;color:#abc9ff">.</span><span style="position:static;display:inline;color:#57b3ff">start</span><span style="position:static;display:inline;color:#abc9ff">(</span><span style="position:static;display:inline;color:#abc9ff">)</span></div>
<span class="m" style="left:18.30000000000001px;top:55px;width:55px;text-align:right;line-height:25px;font-size:16.5px;letter-spacing:-0.9416px;color:#a1c2a8;">58</span>
<svg style="left:105.0px;top:61.75px" width="9" height="10" viewBox="0 0 9 10"><path d="M1 2 4.600 5 1 8" fill="none" stroke="#404759" stroke-width="1.700" stroke-linejoin="miter"/><path d="M7.200 1.500V8.500" stroke="#404759" stroke-width="1.800"/></svg>
<svg style="left:140.84px;top:61.75px" width="9" height="10" viewBox="0 0 9 10"><path d="M1 2 4.600 5 1 8" fill="none" stroke="#404759" stroke-width="1.700" stroke-linejoin="miter"/><path d="M7.200 1.500V8.500" stroke="#404759" stroke-width="1.800"/></svg>
<div class="m code" style="left:105px;top:55px;line-height:25px;font-size:16.5px;letter-spacing:-0.9416px;height:25px;">        <span style="position:static;display:inline;color:#cdcfd2">animation_player</span><span style="position:static;display:inline;color:#abc9ff">.</span><span style="position:static;display:inline;color:#57b3ff">play</span><span style="position:static;display:inline;color:#abc9ff">(</span><span style="position:static;display:inline;color:#cdcfd2">animation</span><span style="position:static;display:inline;color:#abc9ff">)</span></div>
<span class="m" style="left:18.30000000000001px;top:80px;width:55px;text-align:right;line-height:25px;font-size:16.5px;letter-spacing:-0.9416px;color:#a1c2a8;">59</span>
<span class="m" style="left:18.30000000000001px;top:105px;width:55px;text-align:right;line-height:25px;font-size:16.5px;letter-spacing:-0.9416px;color:#a1c2a8;">60</span>
<span class="m" style="left:18.30000000000001px;top:130px;width:55px;text-align:right;line-height:25px;font-size:16.5px;letter-spacing:-0.9416px;color:#a1c2a8;">61</span>
<svg style="left:85px;top:133.75px" width="16" height="16" viewBox="0 0 16 16"><path d="m3.800 6 4.200 4 4.200-4" fill="none" stroke="#575b62" stroke-width="2.500" stroke-linecap="round" stroke-linejoin="round"/></svg>
<div class="m code" style="left:105px;top:130px;line-height:25px;font-size:16.5px;letter-spacing:-0.9416px;height:25px;"><span style="position:static;display:inline;color:#ff7085">func</span> <span style="position:static;display:inline;color:#66e6ff">get_new_animation</span><span style="position:static;display:inline;color:#abc9ff">(</span><span style="position:static;display:inline;color:#cdcfd2">is_shooting</span> <span style="position:static;display:inline;color:#abc9ff">:</span><span style="position:static;display:inline;color:#abc9ff">=</span> <span style="position:static;display:inline;color:#ff7085">false</span><span style="position:static;display:inline;color:#abc9ff">)</span> <span style="position:static;display:inline;color:#abc9ff">-</span><span style="position:static;display:inline;color:#abc9ff">&gt;</span> <span style="position:static;display:inline;color:#42ffc2">String</span><span style="position:static;display:inline;color:#abc9ff">:</span></div>
<span class="m" style="left:18.30000000000001px;top:155px;width:55px;text-align:right;line-height:25px;font-size:16.5px;letter-spacing:-0.9416px;color:#a1c2a8;">62</span>
<svg style="left:105.0px;top:161.75px" width="9" height="10" viewBox="0 0 9 10"><path d="M1 2 4.600 5 1 8" fill="none" stroke="#404759" stroke-width="1.700" stroke-linejoin="miter"/><path d="M7.200 1.500V8.500" stroke="#404759" stroke-width="1.800"/></svg>
<div class="m code" style="left:105px;top:155px;line-height:25px;font-size:16.5px;letter-spacing:-0.9416px;height:25px;">    <span style="position:static;display:inline;color:#ff7085">var</span> <span style="position:static;display:inline;color:#cdcfd2">animation_new</span><span style="position:static;display:inline;color:#abc9ff">:</span> <span style="position:static;display:inline;color:#42ffc2">String</span></div>
<span class="m" style="left:18.30000000000001px;top:180px;width:55px;text-align:right;line-height:25px;font-size:16.5px;letter-spacing:-0.9416px;color:#a1c2a8;">63</span>
<svg style="left:85px;top:183.75px" width="16" height="16" viewBox="0 0 16 16"><path d="m3.800 6 4.200 4 4.200-4" fill="none" stroke="#575b62" stroke-width="2.500" stroke-linecap="round" stroke-linejoin="round"/></svg>
<svg style="left:105.0px;top:186.75px" width="9" height="10" viewBox="0 0 9 10"><path d="M1 2 4.600 5 1 8" fill="none" stroke="#404759" stroke-width="1.700" stroke-linejoin="miter"/><path d="M7.200 1.500V8.500" stroke="#404759" stroke-width="1.800"/></svg>
<div class="m code" style="left:105px;top:180px;line-height:25px;font-size:16.5px;letter-spacing:-0.9416px;height:25px;">    <span style="position:static;display:inline;color:#ff8ccc">if</span> <span style="position:static;display:inline;color:#57b3ff">is_on_floor</span><span style="position:static;display:inline;color:#abc9ff">(</span><span style="position:static;display:inline;color:#abc9ff">)</span><span style="position:static;display:inline;color:#abc9ff">:</span></div>
<span class="m" style="left:18.30000000000001px;top:205px;width:55px;text-align:right;line-height:25px;font-size:16.5px;letter-spacing:-0.9416px;color:#a1c2a8;">64</span>
<svg style="left:85px;top:208.75px" width="16" height="16" viewBox="0 0 16 16"><path d="m3.800 6 4.200 4 4.200-4" fill="none" stroke="#575b62" stroke-width="2.500" stroke-linecap="round" stroke-linejoin="round"/></svg>
<svg style="left:105.0px;top:211.75px" width="9" height="10" viewBox="0 0 9 10"><path d="M1 2 4.600 5 1 8" fill="none" stroke="#404759" stroke-width="1.700" stroke-linejoin="miter"/><path d="M7.200 1.500V8.500" stroke="#404759" stroke-width="1.800"/></svg>
<svg style="left:140.84px;top:211.75px" width="9" height="10" viewBox="0 0 9 10"><path d="M1 2 4.600 5 1 8" fill="none" stroke="#404759" stroke-width="1.700" stroke-linejoin="miter"/><path d="M7.200 1.500V8.500" stroke="#404759" stroke-width="1.800"/></svg>
<div class="m code" style="left:105px;top:205px;line-height:25px;font-size:16.5px;letter-spacing:-0.9416px;height:25px;">        <span style="position:static;display:inline;color:#ff8ccc">if</span> <span style="position:static;display:inline;color:#a3a3f5">absf</span><span style="position:static;display:inline;color:#abc9ff">(</span><span style="position:static;display:inline;color:#bce0ff">velocity</span><span style="position:static;display:inline;color:#abc9ff">.</span><span style="position:static;display:inline;color:#bce0ff">x</span><span style="position:static;display:inline;color:#abc9ff">)</span> <span style="position:static;display:inline;color:#abc9ff">&gt;</span> <span style="position:static;display:inline;color:#a1ffe0">0.1</span><span style="position:static;display:inline;color:#abc9ff">:</span></div>
<span class="m" style="left:18.30000000000001px;top:230px;width:55px;text-align:right;line-height:25px;font-size:16.5px;letter-spacing:-0.9416px;color:#a1c2a8;">65</span>
<svg style="left:105.0px;top:236.75px" width="9" height="10" viewBox="0 0 9 10"><path d="M1 2 4.600 5 1 8" fill="none" stroke="#404759" stroke-width="1.700" stroke-linejoin="miter"/><path d="M7.200 1.500V8.500" stroke="#404759" stroke-width="1.800"/></svg>
<svg style="left:140.84px;top:236.75px" width="9" height="10" viewBox="0 0 9 10"><path d="M1 2 4.600 5 1 8" fill="none" stroke="#404759" stroke-width="1.700" stroke-linejoin="miter"/><path d="M7.200 1.500V8.500" stroke="#404759" stroke-width="1.800"/></svg>
<svg style="left:176.68px;top:236.75px" width="9" height="10" viewBox="0 0 9 10"><path d="M1 2 4.600 5 1 8" fill="none" stroke="#404759" stroke-width="1.700" stroke-linejoin="miter"/><path d="M7.200 1.500V8.500" stroke="#404759" stroke-width="1.800"/></svg>
<div class="m code" style="left:105px;top:230px;line-height:25px;font-size:16.5px;letter-spacing:-0.9416px;height:25px;">            <span style="position:static;display:inline;color:#cdcfd2">animation_new</span> <span style="position:static;display:inline;color:#abc9ff">=</span> <span style="position:static;display:inline;color:#ffeda1">&quot;run&quot;</span></div>
<span class="m" style="left:18.30000000000001px;top:255px;width:55px;text-align:right;line-height:25px;font-size:16.5px;letter-spacing:-0.9416px;color:#a1c2a8;">66</span>
<svg style="left:85px;top:258.75px" width="16" height="16" viewBox="0 0 16 16"><path d="m3.800 6 4.200 4 4.200-4" fill="none" stroke="#575b62" stroke-width="2.500" stroke-linecap="round" stroke-linejoin="round"/></svg>
<svg style="left:105.0px;top:261.75px" width="9" height="10" viewBox="0 0 9 10"><path d="M1 2 4.600 5 1 8" fill="none" stroke="#404759" stroke-width="1.700" stroke-linejoin="miter"/><path d="M7.200 1.500V8.500" stroke="#404759" stroke-width="1.800"/></svg>
<svg style="left:140.84px;top:261.75px" width="9" height="10" viewBox="0 0 9 10"><path d="M1 2 4.600 5 1 8" fill="none" stroke="#404759" stroke-width="1.700" stroke-linejoin="miter"/><path d="M7.200 1.500V8.500" stroke="#404759" stroke-width="1.800"/></svg>
<div class="m code" style="left:105px;top:255px;line-height:25px;font-size:16.5px;letter-spacing:-0.9416px;height:25px;">        <span style="position:static;display:inline;color:#ff8ccc">else</span><span style="position:static;display:inline;color:#abc9ff">:</span></div>
<span class="m" style="left:18.30000000000001px;top:280px;width:55px;text-align:right;line-height:25px;font-size:16.5px;letter-spacing:-0.9416px;color:#a1c2a8;">67</span>
<svg style="left:105.0px;top:286.75px" width="9" height="10" viewBox="0 0 9 10"><path d="M1 2 4.600 5 1 8" fill="none" stroke="#404759" stroke-width="1.700" stroke-linejoin="miter"/><path d="M7.200 1.500V8.500" stroke="#404759" stroke-width="1.800"/></svg>
<svg style="left:140.84px;top:286.75px" width="9" height="10" viewBox="0 0 9 10"><path d="M1 2 4.600 5 1 8" fill="none" stroke="#404759" stroke-width="1.700" stroke-linejoin="miter"/><path d="M7.200 1.500V8.500" stroke="#404759" stroke-width="1.800"/></svg>
<svg style="left:176.68px;top:286.75px" width="9" height="10" viewBox="0 0 9 10"><path d="M1 2 4.600 5 1 8" fill="none" stroke="#404759" stroke-width="1.700" stroke-linejoin="miter"/><path d="M7.200 1.500V8.500" stroke="#404759" stroke-width="1.800"/></svg>
<div class="m code" style="left:105px;top:280px;line-height:25px;font-size:16.5px;letter-spacing:-0.9416px;height:25px;">            <span style="position:static;display:inline;color:#cdcfd2">animation_new</span> <span style="position:static;display:inline;color:#abc9ff">=</span> <span style="position:static;display:inline;color:#ffeda1">&quot;idle&quot;</span></div>
<span class="m" style="left:18.30000000000001px;top:305px;width:55px;text-align:right;line-height:25px;font-size:16.5px;letter-spacing:-0.9416px;color:#a1c2a8;">68</span>
<svg style="left:85px;top:308.75px" width="16" height="16" viewBox="0 0 16 16"><path d="m3.800 6 4.200 4 4.200-4" fill="none" stroke="#575b62" stroke-width="2.500" stroke-linecap="round" stroke-linejoin="round"/></svg>
<svg style="left:105.0px;top:311.75px" width="9" height="10" viewBox="0 0 9 10"><path d="M1 2 4.600 5 1 8" fill="none" stroke="#404759" stroke-width="1.700" stroke-linejoin="miter"/><path d="M7.200 1.500V8.500" stroke="#404759" stroke-width="1.800"/></svg>
<div class="m code" style="left:105px;top:305px;line-height:25px;font-size:16.5px;letter-spacing:-0.9416px;height:25px;">    <span style="position:static;display:inline;color:#ff8ccc">else</span><span style="position:static;display:inline;color:#abc9ff">:</span></div>
<span class="m" style="left:18.30000000000001px;top:330px;width:55px;text-align:right;line-height:25px;font-size:16.5px;letter-spacing:-0.9416px;color:#a1c2a8;">69</span>
<svg style="left:85px;top:333.75px" width="16" height="16" viewBox="0 0 16 16"><path d="m3.800 6 4.200 4 4.200-4" fill="none" stroke="#575b62" stroke-width="2.500" stroke-linecap="round" stroke-linejoin="round"/></svg>
<svg style="left:105.0px;top:336.75px" width="9" height="10" viewBox="0 0 9 10"><path d="M1 2 4.600 5 1 8" fill="none" stroke="#404759" stroke-width="1.700" stroke-linejoin="miter"/><path d="M7.200 1.500V8.500" stroke="#404759" stroke-width="1.800"/></svg>
<svg style="left:140.84px;top:336.75px" width="9" height="10" viewBox="0 0 9 10"><path d="M1 2 4.600 5 1 8" fill="none" stroke="#404759" stroke-width="1.700" stroke-linejoin="miter"/><path d="M7.200 1.500V8.500" stroke="#404759" stroke-width="1.800"/></svg>
<div class="m code" style="left:105px;top:330px;line-height:25px;font-size:16.5px;letter-spacing:-0.9416px;height:25px;">        <span style="position:static;display:inline;color:#ff8ccc">if</span> <span style="position:static;display:inline;color:#bce0ff">velocity</span><span style="position:static;display:inline;color:#abc9ff">.</span><span style="position:static;display:inline;color:#bce0ff">y</span> <span style="position:static;display:inline;color:#abc9ff">&gt;</span> <span style="position:static;display:inline;color:#a1ffe0">0.0</span><span style="position:static;display:inline;color:#abc9ff">:</span></div>
<span class="m" style="left:18.30000000000001px;top:355px;width:55px;text-align:right;line-height:25px;font-size:16.5px;letter-spacing:-0.9416px;color:#a1c2a8;">70</span>
<svg style="left:105.0px;top:361.75px" width="9" height="10" viewBox="0 0 9 10"><path d="M1 2 4.600 5 1 8" fill="none" stroke="#404759" stroke-width="1.700" stroke-linejoin="miter"/><path d="M7.200 1.500V8.500" stroke="#404759" stroke-width="1.800"/></svg>
<svg style="left:140.84px;top:361.75px" width="9" height="10" viewBox="0 0 9 10"><path d="M1 2 4.600 5 1 8" fill="none" stroke="#404759" stroke-width="1.700" stroke-linejoin="miter"/><path d="M7.200 1.500V8.500" stroke="#404759" stroke-width="1.800"/></svg>
<svg style="left:176.68px;top:361.75px" width="9" height="10" viewBox="0 0 9 10"><path d="M1 2 4.600 5 1 8" fill="none" stroke="#404759" stroke-width="1.700" stroke-linejoin="miter"/><path d="M7.200 1.500V8.500" stroke="#404759" stroke-width="1.800"/></svg>
<div class="m code" style="left:105px;top:355px;line-height:25px;font-size:16.5px;letter-spacing:-0.9416px;height:25px;">            <span style="position:static;display:inline;color:#cdcfd2">animation_new</span> <span style="position:static;display:inline;color:#abc9ff">=</span> <span style="position:static;display:inline;color:#ffeda1">&quot;falling&quot;</span></div>
<span class="m" style="left:18.30000000000001px;top:380px;width:55px;text-align:right;line-height:25px;font-size:16.5px;letter-spacing:-0.9416px;color:#a1c2a8;">71</span>
<svg style="left:85px;top:383.75px" width="16" height="16" viewBox="0 0 16 16"><path d="m3.800 6 4.200 4 4.200-4" fill="none" stroke="#575b62" stroke-width="2.500" stroke-linecap="round" stroke-linejoin="round"/></svg>
<svg style="left:105.0px;top:386.75px" width="9" height="10" viewBox="0 0 9 10"><path d="M1 2 4.600 5 1 8" fill="none" stroke="#404759" stroke-width="1.700" stroke-linejoin="miter"/><path d="M7.200 1.500V8.500" stroke="#404759" stroke-width="1.800"/></svg>
<svg style="left:140.84px;top:386.75px" width="9" height="10" viewBox="0 0 9 10"><path d="M1 2 4.600 5 1 8" fill="none" stroke="#404759" stroke-width="1.700" stroke-linejoin="miter"/><path d="M7.200 1.500V8.500" stroke="#404759" stroke-width="1.800"/></svg>
<div class="m code" style="left:105px;top:380px;line-height:25px;font-size:16.5px;letter-spacing:-0.9416px;height:25px;">        <span style="position:static;display:inline;color:#ff8ccc">else</span><span style="position:static;display:inline;color:#abc9ff">:</span></div>
<span class="m" style="left:18.30000000000001px;top:405px;width:55px;text-align:right;line-height:25px;font-size:16.5px;letter-spacing:-0.9416px;color:#a1c2a8;">72</span>
<svg style="left:105.0px;top:411.75px" width="9" height="10" viewBox="0 0 9 10"><path d="M1 2 4.600 5 1 8" fill="none" stroke="#404759" stroke-width="1.700" stroke-linejoin="miter"/><path d="M7.200 1.500V8.500" stroke="#404759" stroke-width="1.800"/></svg>
<svg style="left:140.84px;top:411.75px" width="9" height="10" viewBox="0 0 9 10"><path d="M1 2 4.600 5 1 8" fill="none" stroke="#404759" stroke-width="1.700" stroke-linejoin="miter"/><path d="M7.200 1.500V8.500" stroke="#404759" stroke-width="1.800"/></svg>
<svg style="left:176.68px;top:411.75px" width="9" height="10" viewBox="0 0 9 10"><path d="M1 2 4.600 5 1 8" fill="none" stroke="#404759" stroke-width="1.700" stroke-linejoin="miter"/><path d="M7.200 1.500V8.500" stroke="#404759" stroke-width="1.800"/></svg>
<div class="m code" style="left:105px;top:405px;line-height:25px;font-size:16.5px;letter-spacing:-0.9416px;height:25px;">            <span style="position:static;display:inline;color:#cdcfd2">animation_new</span> <span style="position:static;display:inline;color:#abc9ff">=</span> <span style="position:static;display:inline;color:#ffeda1">&quot;jumping&quot;</span></div>
<span class="m" style="left:18.30000000000001px;top:430px;width:55px;text-align:right;line-height:25px;font-size:16.5px;letter-spacing:-0.9416px;color:#a1c2a8;">73</span>
<svg style="left:85px;top:433.75px" width="16" height="16" viewBox="0 0 16 16"><path d="m3.800 6 4.200 4 4.200-4" fill="none" stroke="#575b62" stroke-width="2.500" stroke-linecap="round" stroke-linejoin="round"/></svg>
<svg style="left:105.0px;top:436.75px" width="9" height="10" viewBox="0 0 9 10"><path d="M1 2 4.600 5 1 8" fill="none" stroke="#404759" stroke-width="1.700" stroke-linejoin="miter"/><path d="M7.200 1.500V8.500" stroke="#404759" stroke-width="1.800"/></svg>
<div class="m code" style="left:105px;top:430px;line-height:25px;font-size:16.5px;letter-spacing:-0.9416px;height:25px;">    <span style="position:static;display:inline;color:#ff8ccc">if</span> <span style="position:static;display:inline;color:#cdcfd2">is_shooting</span><span style="position:static;display:inline;color:#abc9ff">:</span></div>
<span class="m" style="left:18.30000000000001px;top:455px;width:55px;text-align:right;line-height:25px;font-size:16.5px;letter-spacing:-0.9416px;color:#a1c2a8;">74</span>
<svg style="left:105.0px;top:461.75px" width="9" height="10" viewBox="0 0 9 10"><path d="M1 2 4.600 5 1 8" fill="none" stroke="#404759" stroke-width="1.700" stroke-linejoin="miter"/><path d="M7.200 1.500V8.500" stroke="#404759" stroke-width="1.800"/></svg>
<svg style="left:140.84px;top:461.75px" width="9" height="10" viewBox="0 0 9 10"><path d="M1 2 4.600 5 1 8" fill="none" stroke="#404759" stroke-width="1.700" stroke-linejoin="miter"/><path d="M7.200 1.500V8.500" stroke="#404759" stroke-width="1.800"/></svg>
<div class="m code" style="left:105px;top:455px;line-height:25px;font-size:16.5px;letter-spacing:-0.9416px;height:25px;">        <span style="position:static;display:inline;color:#cdcfd2">animation_new</span> <span style="position:static;display:inline;color:#abc9ff">+</span><span style="position:static;display:inline;color:#abc9ff">=</span> <span style="position:static;display:inline;color:#ffeda1">&quot;_weapon&quot;</span></div>
<span class="m" style="left:18.30000000000001px;top:480px;width:55px;text-align:right;line-height:25px;font-size:16.5px;letter-spacing:-0.9416px;color:#a1c2a8;">75</span>
<svg style="left:105.0px;top:486.75px" width="9" height="10" viewBox="0 0 9 10"><path d="M1 2 4.600 5 1 8" fill="none" stroke="#404759" stroke-width="1.700" stroke-linejoin="miter"/><path d="M7.200 1.500V8.500" stroke="#404759" stroke-width="1.800"/></svg>
<div class="m code" style="left:105px;top:480px;line-height:25px;font-size:16.5px;letter-spacing:-0.9416px;height:25px;">    <span style="position:static;display:inline;color:#ff8ccc">return</span> <span style="position:static;display:inline;color:#cdcfd2">animation_new</span></div>
<span class="m" style="left:18.30000000000001px;top:505px;width:55px;text-align:right;line-height:25px;font-size:16.5px;letter-spacing:-0.9416px;color:#a1c2a8;">76</span>
<span class="m" style="left:18.30000000000001px;top:530px;width:55px;text-align:right;line-height:25px;font-size:16.5px;letter-spacing:-0.9416px;color:#a1c2a8;">77</span>
</div>
<svg style="left:547px;top:0px;" width="78" height="559" viewBox="0 0 78 559" shape-rendering="crispEdges"><g opacity=".66"><rect x="0" y="0" width="10" height="2" fill="#ff7085"/><rect x="11" y="0" width="6" height="2" fill="#c7ffed"/><rect x="0" y="3" width="7" height="2" fill="#ff7085"/><rect x="8" y="3" width="15" height="2" fill="#8fffdb"/><rect x="0" y="9" width="6" height="2" fill="#ff7085"/><rect x="7" y="9" width="14" height="2" fill="#bce0ff"/><rect x="21" y="9" width="2" height="2" fill="#abc9ff"/><rect x="0" y="15" width="5" height="2" fill="#ff7085"/><rect x="6" y="15" width="10" height="2" fill="#cdcfd2"/><rect x="17" y="15" width="1" height="2" fill="#abc9ff"/><rect x="19" y="15" width="5" height="2" fill="#a1ffe0"/><rect x="0" y="18" width="5" height="2" fill="#ff7085"/><rect x="6" y="18" width="18" height="2" fill="#cdcfd2"/><rect x="25" y="18" width="1" height="2" fill="#abc9ff"/><rect x="27" y="18" width="10" height="2" fill="#cdcfd2"/><rect x="38" y="18" width="1" height="2" fill="#abc9ff"/><rect x="40" y="18" width="3" height="2" fill="#a1ffe0"/><rect x="0" y="21" width="5" height="2" fill="#ff7085"/><rect x="6" y="21" width="13" height="2" fill="#cdcfd2"/><rect x="20" y="21" width="1" height="2" fill="#abc9ff"/><rect x="22" y="21" width="1" height="2" fill="#abc9ff"/><rect x="23" y="21" width="5" height="2" fill="#a1ffe0"/><rect x="0" y="24" width="2" height="2" fill="#7f93a8"/><rect x="3" y="24" width="7" height="2" fill="#7f93a8"/><rect x="11" y="24" width="5" height="2" fill="#7f93a8"/><rect x="17" y="24" width="2" height="2" fill="#7f93a8"/><rect x="20" y="24" width="5" height="2" fill="#7f93a8"/><rect x="26" y="24" width="3" height="2" fill="#7f93a8"/><rect x="30" y="24" width="6" height="2" fill="#7f93a8"/><rect x="37" y="24" width="3" height="2" fill="#7f93a8"/><rect x="41" y="24" width="5" height="2" fill="#7f93a8"/><rect x="0" y="27" width="5" height="2" fill="#ff7085"/><rect x="6" y="27" width="17" height="2" fill="#cdcfd2"/><rect x="24" y="27" width="1" height="2" fill="#abc9ff"/><rect x="26" y="27" width="3" height="2" fill="#a1ffe0"/><rect x="0" y="33" width="2" height="2" fill="#7f93a8"/><rect x="3" y="33" width="3" height="2" fill="#7f93a8"/><rect x="7" y="33" width="6" height="2" fill="#7f93a8"/><rect x="14" y="33" width="7" height="2" fill="#7f93a8"/><rect x="22" y="33" width="3" height="2" fill="#7f93a8"/><rect x="26" y="33" width="5" height="2" fill="#7f93a8"/><rect x="32" y="33" width="7" height="2" fill="#7f93a8"/><rect x="40" y="33" width="8" height="2" fill="#7f93a8"/><rect x="49" y="33" width="4" height="2" fill="#7f93a8"/><rect x="54" y="33" width="4" height="2" fill="#7f93a8"/><rect x="59" y="33" width="11" height="2" fill="#7f93a8"/><rect x="0" y="36" width="2" height="2" fill="#7f93a8"/><rect x="3" y="36" width="4" height="2" fill="#7f93a8"/><rect x="8" y="36" width="2" height="2" fill="#7f93a8"/><rect x="11" y="36" width="8" height="2" fill="#7f93a8"/><rect x="20" y="36" width="8" height="2" fill="#7f93a8"/><rect x="29" y="36" width="3" height="2" fill="#7f93a8"/><rect x="33" y="36" width="8" height="2" fill="#7f93a8"/><rect x="42" y="36" width="7" height="2" fill="#7f93a8"/><rect x="50" y="36" width="2" height="2" fill="#7f93a8"/><rect x="53" y="36" width="12" height="2" fill="#7f93a8"/><rect x="0" y="39" width="7" height="2" fill="#ffb373"/><rect x="8" y="39" width="3" height="2" fill="#ff7085"/><rect x="12" y="39" width="13" height="2" fill="#cdcfd2"/><rect x="26" y="39" width="2" height="2" fill="#abc9ff"/><rect x="29" y="39" width="2" height="2" fill="#ffeda1"/><rect x="0" y="45" width="3" height="2" fill="#ff7085"/><rect x="4" y="45" width="7" height="2" fill="#cdcfd2"/><rect x="11" y="45" width="1" height="2" fill="#abc9ff"/><rect x="13" y="45" width="3" height="2" fill="#42ffc2"/><rect x="17" y="45" width="1" height="2" fill="#abc9ff"/><rect x="19" y="45" width="15" height="2" fill="#8fffdb"/><rect x="34" y="45" width="1" height="2" fill="#abc9ff"/><rect x="35" y="45" width="3" height="2" fill="#57b3ff"/><rect x="38" y="45" width="1" height="2" fill="#abc9ff"/><rect x="39" y="45" width="28" height="2" fill="#ffeda1"/><rect x="67" y="45" width="1" height="2" fill="#abc9ff"/><rect x="0" y="48" width="8" height="2" fill="#ffb373"/><rect x="9" y="48" width="3" height="2" fill="#ff7085"/><rect x="13" y="48" width="17" height="2" fill="#cdcfd2"/><rect x="31" y="48" width="2" height="2" fill="#abc9ff"/><rect x="34" y="48" width="17" height="2" fill="#63c259"/><rect x="52" y="48" width="2" height="2" fill="#ff7085"/><rect x="55" y="48" width="9" height="2" fill="#8fffdb"/><rect x="0" y="51" width="8" height="2" fill="#ffb373"/><rect x="9" y="51" width="3" height="2" fill="#ff7085"/><rect x="13" y="51" width="16" height="2" fill="#cdcfd2"/><rect x="30" y="51" width="2" height="2" fill="#abc9ff"/><rect x="33" y="51" width="16" height="2" fill="#63c259"/><rect x="50" y="51" width="2" height="2" fill="#ff7085"/><rect x="53" y="51" width="15" height="2" fill="#8fffdb"/><rect x="0" y="54" width="8" height="2" fill="#ffb373"/><rect x="9" y="54" width="3" height="2" fill="#ff7085"/><rect x="13" y="54" width="11" height="2" fill="#cdcfd2"/><rect x="25" y="54" width="2" height="2" fill="#abc9ff"/><rect x="28" y="54" width="15" height="2" fill="#63c259"/><rect x="44" y="54" width="2" height="2" fill="#ff7085"/><rect x="47" y="54" width="5" height="2" fill="#8fffdb"/><rect x="0" y="57" width="8" height="2" fill="#ffb373"/><rect x="9" y="57" width="3" height="2" fill="#ff7085"/><rect x="13" y="57" width="6" height="2" fill="#cdcfd2"/><rect x="20" y="57" width="2" height="2" fill="#abc9ff"/><rect x="23" y="57" width="9" height="2" fill="#63c259"/><rect x="33" y="57" width="2" height="2" fill="#ff7085"/><rect x="36" y="57" width="8" height="2" fill="#8fffdb"/><rect x="0" y="60" width="8" height="2" fill="#ffb373"/><rect x="9" y="60" width="3" height="2" fill="#ff7085"/><rect x="13" y="60" width="10" height="2" fill="#cdcfd2"/><rect x="24" y="60" width="2" height="2" fill="#abc9ff"/><rect x="27" y="60" width="5" height="2" fill="#63c259"/><rect x="33" y="60" width="2" height="2" fill="#ff7085"/><rect x="36" y="60" width="19" height="2" fill="#8fffdb"/><rect x="0" y="63" width="8" height="2" fill="#ffb373"/><rect x="9" y="63" width="3" height="2" fill="#ff7085"/><rect x="13" y="63" width="3" height="2" fill="#cdcfd2"/><rect x="16" y="63" width="1" height="2" fill="#abc9ff"/><rect x="18" y="63" width="3" height="2" fill="#c7ffed"/><rect x="22" y="63" width="1" height="2" fill="#abc9ff"/><rect x="24" y="63" width="6" height="2" fill="#cdcfd2"/><rect x="30" y="63" width="1" height="2" fill="#abc9ff"/><rect x="31" y="63" width="8" height="2" fill="#57b3ff"/><rect x="39" y="63" width="1" height="2" fill="#abc9ff"/><rect x="40" y="63" width="6" height="2" fill="#b8c47d"/><rect x="46" y="63" width="1" height="2" fill="#abc9ff"/><rect x="0" y="66" width="8" height="2" fill="#ffb373"/><rect x="9" y="66" width="3" height="2" fill="#ff7085"/><rect x="13" y="66" width="6" height="2" fill="#cdcfd2"/><rect x="20" y="66" width="2" height="2" fill="#abc9ff"/><rect x="23" y="66" width="7" height="2" fill="#63c259"/><rect x="31" y="66" width="2" height="2" fill="#ff7085"/><rect x="34" y="66" width="8" height="2" fill="#8fffdb"/><rect x="0" y="69" width="3" height="2" fill="#ff7085"/><rect x="4" y="69" width="20" height="2" fill="#cdcfd2"/><rect x="25" y="69" width="2" height="2" fill="#abc9ff"/><rect x="28" y="69" width="5" height="2" fill="#ff7085"/><rect x="0" y="78" width="4" height="2" fill="#ff7085"/><rect x="5" y="78" width="16" height="2" fill="#66e6ff"/><rect x="21" y="78" width="1" height="2" fill="#abc9ff"/><rect x="22" y="78" width="5" height="2" fill="#cdcfd2"/><rect x="27" y="78" width="1" height="2" fill="#abc9ff"/><rect x="29" y="78" width="5" height="2" fill="#42ffc2"/><rect x="34" y="78" width="1" height="2" fill="#abc9ff"/><rect x="36" y="78" width="2" height="2" fill="#abc9ff"/><rect x="39" y="78" width="4" height="2" fill="#42ffc2"/><rect x="43" y="78" width="1" height="2" fill="#abc9ff"/><rect x="4" y="81" width="2" height="2" fill="#ff8ccc"/><rect x="7" y="81" width="11" height="2" fill="#57b3ff"/><rect x="18" y="81" width="3" height="2" fill="#abc9ff"/><rect x="8" y="84" width="20" height="2" fill="#cdcfd2"/><rect x="29" y="84" width="1" height="2" fill="#abc9ff"/><rect x="31" y="84" width="4" height="2" fill="#ff7085"/><rect x="4" y="87" width="2" height="2" fill="#ff8ccc"/><rect x="7" y="87" width="5" height="2" fill="#8fffdb"/><rect x="12" y="87" width="1" height="2" fill="#abc9ff"/><rect x="13" y="87" width="22" height="2" fill="#57b3ff"/><rect x="35" y="87" width="1" height="2" fill="#abc9ff"/><rect x="36" y="87" width="6" height="2" fill="#ffeda1"/><rect x="43" y="87" width="1" height="2" fill="#abc9ff"/><rect x="45" y="87" width="13" height="2" fill="#cdcfd2"/><rect x="58" y="87" width="2" height="2" fill="#abc9ff"/><rect x="8" y="90" width="8" height="2" fill="#57b3ff"/><rect x="16" y="90" width="2" height="2" fill="#abc9ff"/><rect x="4" y="93" width="4" height="2" fill="#ff8ccc"/><rect x="9" y="93" width="5" height="2" fill="#8fffdb"/><rect x="14" y="93" width="1" height="2" fill="#abc9ff"/><rect x="15" y="93" width="23" height="2" fill="#57b3ff"/><rect x="38" y="93" width="1" height="2" fill="#abc9ff"/><rect x="39" y="93" width="6" height="2" fill="#ffeda1"/><rect x="46" y="93" width="1" height="2" fill="#abc9ff"/><rect x="48" y="93" width="13" height="2" fill="#cdcfd2"/><rect x="61" y="93" width="1" height="2" fill="#abc9ff"/><rect x="63" y="93" width="3" height="2" fill="#ff7085"/><rect x="67" y="93" width="8" height="2" fill="#bce0ff"/><rect x="75" y="93" width="1" height="2" fill="#abc9ff"/><rect x="76" y="93" width="1" height="2" fill="#bce0ff"/><rect x="78" y="93" width="1" height="2" fill="#abc9ff"/><rect x="80" y="93" width="3" height="2" fill="#a1ffe0"/><rect x="83" y="93" width="1" height="2" fill="#abc9ff"/><rect x="8" y="96" width="1" height="2" fill="#787c83"/><rect x="10" y="96" width="3" height="2" fill="#787c83"/><rect x="14" y="96" width="6" height="2" fill="#787c83"/><rect x="21" y="96" width="3" height="2" fill="#787c83"/><rect x="25" y="96" width="2" height="2" fill="#787c83"/><rect x="28" y="96" width="2" height="2" fill="#787c83"/><rect x="31" y="96" width="4" height="2" fill="#787c83"/><rect x="36" y="96" width="6" height="2" fill="#787c83"/><rect x="43" y="96" width="6" height="2" fill="#787c83"/><rect x="50" y="96" width="8" height="2" fill="#787c83"/><rect x="59" y="96" width="9" height="2" fill="#787c83"/><rect x="8" y="99" width="8" height="2" fill="#bce0ff"/><rect x="16" y="99" width="1" height="2" fill="#abc9ff"/><rect x="17" y="99" width="1" height="2" fill="#bce0ff"/><rect x="19" y="99" width="2" height="2" fill="#abc9ff"/><rect x="22" y="99" width="3" height="2" fill="#a1ffe0"/><rect x="4" y="102" width="1" height="2" fill="#787c83"/><rect x="6" y="102" width="5" height="2" fill="#787c83"/><rect x="4" y="105" width="8" height="2" fill="#bce0ff"/><rect x="12" y="105" width="1" height="2" fill="#abc9ff"/><rect x="13" y="105" width="1" height="2" fill="#bce0ff"/><rect x="15" y="105" width="1" height="2" fill="#abc9ff"/><rect x="17" y="105" width="4" height="2" fill="#a3a3f5"/><rect x="21" y="105" width="1" height="2" fill="#abc9ff"/><rect x="22" y="105" width="17" height="2" fill="#cdcfd2"/><rect x="39" y="105" width="1" height="2" fill="#abc9ff"/><rect x="41" y="105" width="8" height="2" fill="#bce0ff"/><rect x="49" y="105" width="1" height="2" fill="#abc9ff"/><rect x="50" y="105" width="1" height="2" fill="#bce0ff"/><rect x="52" y="105" width="1" height="2" fill="#abc9ff"/><rect x="54" y="105" width="7" height="2" fill="#cdcfd2"/><rect x="62" y="105" width="1" height="2" fill="#abc9ff"/><rect x="64" y="105" width="5" height="2" fill="#cdcfd2"/><rect x="69" y="105" width="1" height="2" fill="#abc9ff"/><rect x="4" y="111" width="3" height="2" fill="#ff7085"/><rect x="8" y="111" width="9" height="2" fill="#cdcfd2"/><rect x="18" y="111" width="2" height="2" fill="#abc9ff"/><rect x="21" y="111" width="5" height="2" fill="#8fffdb"/><rect x="26" y="111" width="1" height="2" fill="#abc9ff"/><rect x="27" y="111" width="8" height="2" fill="#57b3ff"/><rect x="35" y="111" width="1" height="2" fill="#abc9ff"/><rect x="36" y="111" width="11" height="2" fill="#ffeda1"/><rect x="48" y="111" width="1" height="2" fill="#abc9ff"/><rect x="50" y="111" width="13" height="2" fill="#cdcfd2"/><rect x="63" y="111" width="1" height="2" fill="#abc9ff"/><rect x="65" y="111" width="12" height="2" fill="#ffeda1"/><rect x="78" y="111" width="1" height="2" fill="#abc9ff"/><rect x="80" y="111" width="13" height="2" fill="#cdcfd2"/><rect x="93" y="111" width="1" height="2" fill="#abc9ff"/><rect x="95" y="111" width="1" height="2" fill="#abc9ff"/><rect x="97" y="111" width="10" height="2" fill="#cdcfd2"/><rect x="4" y="114" width="8" height="2" fill="#bce0ff"/><rect x="12" y="114" width="1" height="2" fill="#abc9ff"/><rect x="13" y="114" width="1" height="2" fill="#bce0ff"/><rect x="15" y="114" width="1" height="2" fill="#abc9ff"/><rect x="17" y="114" width="11" height="2" fill="#a3a3f5"/><rect x="28" y="114" width="1" height="2" fill="#abc9ff"/><rect x="29" y="114" width="8" height="2" fill="#bce0ff"/><rect x="37" y="114" width="1" height="2" fill="#abc9ff"/><rect x="38" y="114" width="1" height="2" fill="#bce0ff"/><rect x="39" y="114" width="1" height="2" fill="#abc9ff"/><rect x="41" y="114" width="9" height="2" fill="#cdcfd2"/><rect x="50" y="114" width="1" height="2" fill="#abc9ff"/><rect x="52" y="114" width="18" height="2" fill="#cdcfd2"/><rect x="71" y="114" width="1" height="2" fill="#abc9ff"/><rect x="73" y="114" width="5" height="2" fill="#cdcfd2"/><rect x="78" y="114" width="1" height="2" fill="#abc9ff"/><rect x="4" y="120" width="2" height="2" fill="#ff8ccc"/><rect x="7" y="120" width="3" height="2" fill="#ff7085"/><rect x="11" y="120" width="14" height="2" fill="#a3a3f5"/><rect x="25" y="120" width="1" height="2" fill="#abc9ff"/><rect x="26" y="120" width="8" height="2" fill="#bce0ff"/><rect x="34" y="120" width="1" height="2" fill="#abc9ff"/><rect x="35" y="120" width="1" height="2" fill="#bce0ff"/><rect x="36" y="120" width="2" height="2" fill="#abc9ff"/><rect x="8" y="123" width="2" height="2" fill="#ff8ccc"/><rect x="11" y="123" width="8" height="2" fill="#bce0ff"/><rect x="19" y="123" width="1" height="2" fill="#abc9ff"/><rect x="20" y="123" width="1" height="2" fill="#bce0ff"/><rect x="22" y="123" width="1" height="2" fill="#abc9ff"/><rect x="24" y="123" width="3" height="2" fill="#a1ffe0"/><rect x="27" y="123" width="1" height="2" fill="#abc9ff"/><rect x="12" y="126" width="6" height="2" fill="#cdcfd2"/><rect x="18" y="126" width="1" height="2" fill="#abc9ff"/><rect x="19" y="126" width="5" height="2" fill="#bce0ff"/><rect x="24" y="126" width="1" height="2" fill="#abc9ff"/><rect x="25" y="126" width="1" height="2" fill="#bce0ff"/><rect x="27" y="126" width="1" height="2" fill="#abc9ff"/><rect x="29" y="126" width="3" height="2" fill="#a1ffe0"/><rect x="8" y="129" width="4" height="2" fill="#ff8ccc"/><rect x="12" y="129" width="1" height="2" fill="#abc9ff"/><rect x="12" y="132" width="6" height="2" fill="#cdcfd2"/><rect x="18" y="132" width="1" height="2" fill="#abc9ff"/><rect x="19" y="132" width="5" height="2" fill="#bce0ff"/><rect x="24" y="132" width="1" height="2" fill="#abc9ff"/><rect x="25" y="132" width="1" height="2" fill="#bce0ff"/><rect x="27" y="132" width="1" height="2" fill="#abc9ff"/><rect x="29" y="132" width="1" height="2" fill="#abc9ff"/><rect x="30" y="132" width="3" height="2" fill="#a1ffe0"/><rect x="4" y="138" width="19" height="2" fill="#bce0ff"/><rect x="24" y="138" width="1" height="2" fill="#abc9ff"/><rect x="26" y="138" width="3" height="2" fill="#ff7085"/><rect x="30" y="138" width="17" height="2" fill="#cdcfd2"/><rect x="47" y="138" width="1" height="2" fill="#abc9ff"/><rect x="48" y="138" width="12" height="2" fill="#57b3ff"/><rect x="60" y="138" width="2" height="2" fill="#abc9ff"/><rect x="4" y="141" width="14" height="2" fill="#57b3ff"/><rect x="18" y="141" width="2" height="2" fill="#abc9ff"/><rect x="4" y="147" width="3" height="2" fill="#ff7085"/><rect x="8" y="147" width="11" height="2" fill="#cdcfd2"/><rect x="20" y="147" width="2" height="2" fill="#abc9ff"/><rect x="23" y="147" width="5" height="2" fill="#ff7085"/><rect x="4" y="150" width="2" height="2" fill="#ff8ccc"/><rect x="7" y="150" width="5" height="2" fill="#8fffdb"/><rect x="12" y="150" width="1" height="2" fill="#abc9ff"/><rect x="13" y="150" width="22" height="2" fill="#57b3ff"/><rect x="35" y="150" width="1" height="2" fill="#abc9ff"/><rect x="36" y="150" width="7" height="2" fill="#ffeda1"/><rect x="44" y="150" width="1" height="2" fill="#abc9ff"/><rect x="46" y="150" width="13" height="2" fill="#cdcfd2"/><rect x="59" y="150" width="2" height="2" fill="#abc9ff"/><rect x="8" y="153" width="11" height="2" fill="#cdcfd2"/><rect x="20" y="153" width="1" height="2" fill="#abc9ff"/><rect x="22" y="153" width="3" height="2" fill="#cdcfd2"/><rect x="25" y="153" width="1" height="2" fill="#abc9ff"/><rect x="26" y="153" width="5" height="2" fill="#57b3ff"/><rect x="31" y="153" width="1" height="2" fill="#abc9ff"/><rect x="32" y="153" width="6" height="2" fill="#cdcfd2"/><rect x="38" y="153" width="1" height="2" fill="#abc9ff"/><rect x="39" y="153" width="5" height="2" fill="#bce0ff"/><rect x="44" y="153" width="1" height="2" fill="#abc9ff"/><rect x="45" y="153" width="1" height="2" fill="#bce0ff"/><rect x="46" y="153" width="1" height="2" fill="#abc9ff"/><rect x="4" y="159" width="3" height="2" fill="#ff7085"/><rect x="8" y="159" width="9" height="2" fill="#cdcfd2"/><rect x="18" y="159" width="2" height="2" fill="#abc9ff"/><rect x="21" y="159" width="17" height="2" fill="#57b3ff"/><rect x="38" y="159" width="1" height="2" fill="#abc9ff"/><rect x="39" y="159" width="11" height="2" fill="#cdcfd2"/><rect x="50" y="159" width="1" height="2" fill="#abc9ff"/><rect x="4" y="162" width="2" height="2" fill="#ff8ccc"/><rect x="7" y="162" width="9" height="2" fill="#cdcfd2"/><rect x="17" y="162" width="2" height="2" fill="#abc9ff"/><rect x="20" y="162" width="16" height="2" fill="#cdcfd2"/><rect x="36" y="162" width="1" height="2" fill="#abc9ff"/><rect x="37" y="162" width="17" height="2" fill="#bce0ff"/><rect x="55" y="162" width="3" height="2" fill="#ff7085"/><rect x="59" y="162" width="11" height="2" fill="#cdcfd2"/><rect x="70" y="162" width="1" height="2" fill="#abc9ff"/><rect x="71" y="162" width="10" height="2" fill="#57b3ff"/><rect x="81" y="162" width="3" height="2" fill="#abc9ff"/><rect x="8" y="165" width="2" height="2" fill="#ff8ccc"/><rect x="11" y="165" width="11" height="2" fill="#cdcfd2"/><rect x="22" y="165" width="1" height="2" fill="#abc9ff"/><rect x="12" y="168" width="11" height="2" fill="#cdcfd2"/><rect x="23" y="168" width="1" height="2" fill="#abc9ff"/><rect x="24" y="168" width="5" height="2" fill="#57b3ff"/><rect x="29" y="168" width="2" height="2" fill="#abc9ff"/><rect x="8" y="171" width="16" height="2" fill="#cdcfd2"/><rect x="24" y="171" width="1" height="2" fill="#abc9ff"/><rect x="25" y="171" width="4" height="2" fill="#57b3ff"/><rect x="29" y="171" width="1" height="2" fill="#abc9ff"/><rect x="30" y="171" width="9" height="2" fill="#cdcfd2"/><rect x="39" y="171" width="1" height="2" fill="#abc9ff"/><rect x="0" y="180" width="4" height="2" fill="#ff7085"/><rect x="5" y="180" width="17" height="2" fill="#66e6ff"/><rect x="22" y="180" width="1" height="2" fill="#abc9ff"/><rect x="23" y="180" width="11" height="2" fill="#cdcfd2"/><rect x="35" y="180" width="2" height="2" fill="#abc9ff"/><rect x="38" y="180" width="5" height="2" fill="#ff7085"/><rect x="43" y="180" width="1" height="2" fill="#abc9ff"/><rect x="45" y="180" width="2" height="2" fill="#abc9ff"/><rect x="48" y="180" width="6" height="2" fill="#42ffc2"/><rect x="54" y="180" width="1" height="2" fill="#abc9ff"/><rect x="4" y="183" width="3" height="2" fill="#ff7085"/><rect x="8" y="183" width="13" height="2" fill="#cdcfd2"/><rect x="21" y="183" width="1" height="2" fill="#abc9ff"/><rect x="23" y="183" width="6" height="2" fill="#42ffc2"/><rect x="4" y="186" width="2" height="2" fill="#ff8ccc"/><rect x="7" y="186" width="11" height="2" fill="#57b3ff"/><rect x="18" y="186" width="3" height="2" fill="#abc9ff"/><rect x="8" y="189" width="2" height="2" fill="#ff8ccc"/><rect x="11" y="189" width="4" height="2" fill="#a3a3f5"/><rect x="15" y="189" width="1" height="2" fill="#abc9ff"/><rect x="16" y="189" width="8" height="2" fill="#bce0ff"/><rect x="24" y="189" width="1" height="2" fill="#abc9ff"/><rect x="25" y="189" width="1" height="2" fill="#bce0ff"/><rect x="26" y="189" width="1" height="2" fill="#abc9ff"/><rect x="28" y="189" width="1" height="2" fill="#abc9ff"/><rect x="30" y="189" width="3" height="2" fill="#a1ffe0"/><rect x="33" y="189" width="1" height="2" fill="#abc9ff"/><rect x="12" y="192" width="13" height="2" fill="#cdcfd2"/><rect x="26" y="192" width="1" height="2" fill="#abc9ff"/><rect x="28" y="192" width="5" height="2" fill="#ffeda1"/><rect x="8" y="195" width="4" height="2" fill="#ff8ccc"/><rect x="12" y="195" width="1" height="2" fill="#abc9ff"/><rect x="12" y="198" width="13" height="2" fill="#cdcfd2"/><rect x="26" y="198" width="1" height="2" fill="#abc9ff"/><rect x="28" y="198" width="6" height="2" fill="#ffeda1"/><rect x="4" y="201" width="4" height="2" fill="#ff8ccc"/><rect x="8" y="201" width="1" height="2" fill="#abc9ff"/><rect x="8" y="204" width="2" height="2" fill="#ff8ccc"/><rect x="11" y="204" width="8" height="2" fill="#bce0ff"/><rect x="19" y="204" width="1" height="2" fill="#abc9ff"/><rect x="20" y="204" width="1" height="2" fill="#bce0ff"/><rect x="22" y="204" width="1" height="2" fill="#abc9ff"/><rect x="24" y="204" width="3" height="2" fill="#a1ffe0"/><rect x="27" y="204" width="1" height="2" fill="#abc9ff"/><rect x="12" y="207" width="13" height="2" fill="#cdcfd2"/><rect x="26" y="207" width="1" height="2" fill="#abc9ff"/><rect x="28" y="207" width="9" height="2" fill="#ffeda1"/><rect x="8" y="210" width="4" height="2" fill="#ff8ccc"/><rect x="12" y="210" width="1" height="2" fill="#abc9ff"/><rect x="12" y="213" width="13" height="2" fill="#cdcfd2"/><rect x="26" y="213" width="1" height="2" fill="#abc9ff"/><rect x="28" y="213" width="9" height="2" fill="#ffeda1"/><rect x="4" y="216" width="2" height="2" fill="#ff8ccc"/><rect x="7" y="216" width="11" height="2" fill="#cdcfd2"/><rect x="18" y="216" width="1" height="2" fill="#abc9ff"/><rect x="8" y="219" width="13" height="2" fill="#cdcfd2"/><rect x="22" y="219" width="2" height="2" fill="#abc9ff"/><rect x="25" y="219" width="9" height="2" fill="#ffeda1"/><rect x="4" y="222" width="6" height="2" fill="#ff8ccc"/><rect x="11" y="222" width="13" height="2" fill="#cdcfd2"/><rect x="0" y="231" width="4" height="2" fill="#ff7085"/><rect x="5" y="231" width="8" height="2" fill="#66e6ff"/><rect x="13" y="231" width="2" height="2" fill="#abc9ff"/><rect x="16" y="231" width="2" height="2" fill="#abc9ff"/><rect x="19" y="231" width="4" height="2" fill="#42ffc2"/><rect x="23" y="231" width="1" height="2" fill="#abc9ff"/><rect x="4" y="234" width="2" height="2" fill="#ff8ccc"/><rect x="7" y="234" width="11" height="2" fill="#57b3ff"/><rect x="18" y="234" width="3" height="2" fill="#abc9ff"/><rect x="4" y="237" width="4" height="2" fill="#ff8ccc"/><rect x="9" y="237" width="20" height="2" fill="#cdcfd2"/><rect x="29" y="237" width="1" height="2" fill="#abc9ff"/><rect x="8" y="240" width="20" height="2" fill="#cdcfd2"/><rect x="29" y="240" width="1" height="2" fill="#abc9ff"/><rect x="31" y="240" width="5" height="2" fill="#ff7085"/><rect x="8" y="243" width="8" height="2" fill="#bce0ff"/><rect x="16" y="243" width="1" height="2" fill="#abc9ff"/><rect x="17" y="243" width="1" height="2" fill="#bce0ff"/><rect x="19" y="243" width="2" height="2" fill="#abc9ff"/><rect x="22" y="243" width="3" height="2" fill="#a1ffe0"/><rect x="8" y="246" width="10" height="2" fill="#cdcfd2"/><rect x="18" y="246" width="1" height="2" fill="#abc9ff"/><rect x="19" y="246" width="11" height="2" fill="#bce0ff"/><rect x="31" y="246" width="1" height="2" fill="#abc9ff"/><rect x="33" y="246" width="3" height="2" fill="#a1ffe0"/><rect x="4" y="249" width="4" height="2" fill="#ff8ccc"/><rect x="8" y="249" width="1" height="2" fill="#abc9ff"/><rect x="8" y="252" width="6" height="2" fill="#ff8ccc"/><rect x="4" y="255" width="8" height="2" fill="#bce0ff"/><rect x="12" y="255" width="1" height="2" fill="#abc9ff"/><rect x="13" y="255" width="1" height="2" fill="#bce0ff"/><rect x="15" y="255" width="1" height="2" fill="#abc9ff"/><rect x="17" y="255" width="13" height="2" fill="#cdcfd2"/><rect x="4" y="258" width="10" height="2" fill="#cdcfd2"/><rect x="14" y="258" width="1" height="2" fill="#abc9ff"/><rect x="15" y="258" width="4" height="2" fill="#57b3ff"/><rect x="19" y="258" width="2" height="2" fill="#abc9ff"/></g></svg>
<div style="left:623px;top:8px;width:4px;height:537px;background:#2e323a;border-radius:2px;"></div>
<div style="left:622px;top:337px;width:6px;height:137px;background:#686c72;border-radius:3px;"></div>
<div style="left:547px;top:166px;width:80px;height:66px;background:rgba(255,255,255,0.105);"></div>
<div style="left:0px;top:554px;width:545px;height:5px;background:#2a2e35;"></div>
<div style="left:4px;top:551px;width:611px;height:4px;background:#2e323a;border-radius:2px;"></div>
<div style="left:4px;top:550px;width:335px;height:6px;background:#686c72;border-radius:3px;"></div>
</div>
<div style="left:664px;top:633px;width:2px;height:1px;background:#4b5a72;"></div>
<div style="left:668px;top:633px;width:2px;height:1px;background:#4b5a72;"></div>
<svg style="left:438px;top:647px;overflow:visible;" width="16" height="16" viewBox="0 0 16 16"><path d="M10.400 1.400 6 8l4.400 6.600" stroke="#e0e0e0" stroke-width="2" stroke-linejoin="miter" fill="none"/></svg>
<svg style="left:806px;top:647px;overflow:visible;" width="16" height="16" viewBox="0 0 16 16"><path fill="#ffdd65" fill-rule="evenodd" d="M8 1.800a1 1 0 0 0-.87.500L.95 12.600a.9.9 0 0 0 .8 1.350h12.500a.9.9 0 0 0 .8-1.350L8.870 2.300A1 1 0 0 0 8 1.800zM7 5h2v5.400H7zM7 11.200h2v1.700H7z"/></svg>
<span id="t37" class="m " style="left:826px;top:646.0px;line-height:20px;font-size:15.4px;color:#ffdd65;">1</span>
<div style="left:846px;top:636px;width:1px;height:38px;background:#4a505c;"></div>
<span id="t38" class="m " style="left:859.6px;top:646.0px;line-height:20px;font-size:15.4px;color:#cdcfd2;letter-spacing:-1.061px;margin-left:-1.00px;">107 %</span>
<div style="left:913px;top:636px;width:1px;height:38px;background:#4a505c;"></div>
<span id="t39" class="m " style="left:941.7px;top:646.0px;line-height:20px;font-size:15.4px;color:#cdcfd2;letter-spacing:-0.936px;margin-left:-1.00px;">78 :   1</span>
<div style="left:1018px;top:636px;width:1px;height:38px;background:#4a505c;"></div>
<span id="t40" class="m " style="left:1029.6px;top:646.0px;line-height:20px;font-size:15.4px;color:#cdcfd2;letter-spacing:-1.103px;margin-left:0.00px;">Tabs</span>
<div style="left:278px;top:682px;width:792px;height:39px;background:#363d4a;border-radius:3px 0 0 3px;"></div>
<span id="t41" class="t " style="left:288px;top:693.0px;line-height:20px;font-size:14px;color:#cdcfd2;letter-spacing:0.832px;margin-left:0.00px;">Output</span>
<span id="t42" class="t " style="left:351.6px;top:693.0px;line-height:20px;font-size:14px;color:#cdcfd2;letter-spacing:0.610px;margin-left:-1.00px;">Debugger</span>
<span id="t43" class="t " style="left:434px;top:693.0px;line-height:20px;font-size:14px;color:#cdcfd2;letter-spacing:0.445px;margin-left:0.00px;">Audio</span>
<span id="t44" class="t " style="left:489px;top:693.0px;line-height:20px;font-size:14px;color:#cdcfd2;letter-spacing:0.766px;margin-left:0.00px;">Animation</span>
<span id="t45" class="t " style="left:573.5px;top:693.0px;line-height:20px;font-size:14px;color:#cdcfd2;letter-spacing:0.205px;margin-left:0.00px;">Shader Editor</span>
<svg style="left:1002px;top:695.5px;overflow:visible;" width="16" height="16" viewBox="0 0 16 16"><g transform="rotate(20 8 8)" fill="#4c515c"><path d="M8 1.500C5.300 1.500 4.200 3.700 4.200 6.300V9.300L2.400 11.400V12.400H13.600V11.400L11.800 9.300V6.300C11.800 3.700 10.700 1.500 8 1.500z"/><circle cx="8.300" cy="13.300" r="1.300"/></g></svg>
<span id="t46" class="t " style="left:1027.4px;top:693.0px;line-height:20px;font-size:14px;color:#868a91;letter-spacing:-0.023px;margin-left:0.00px;">4.3.rc</span>
</div>
</body></html>
